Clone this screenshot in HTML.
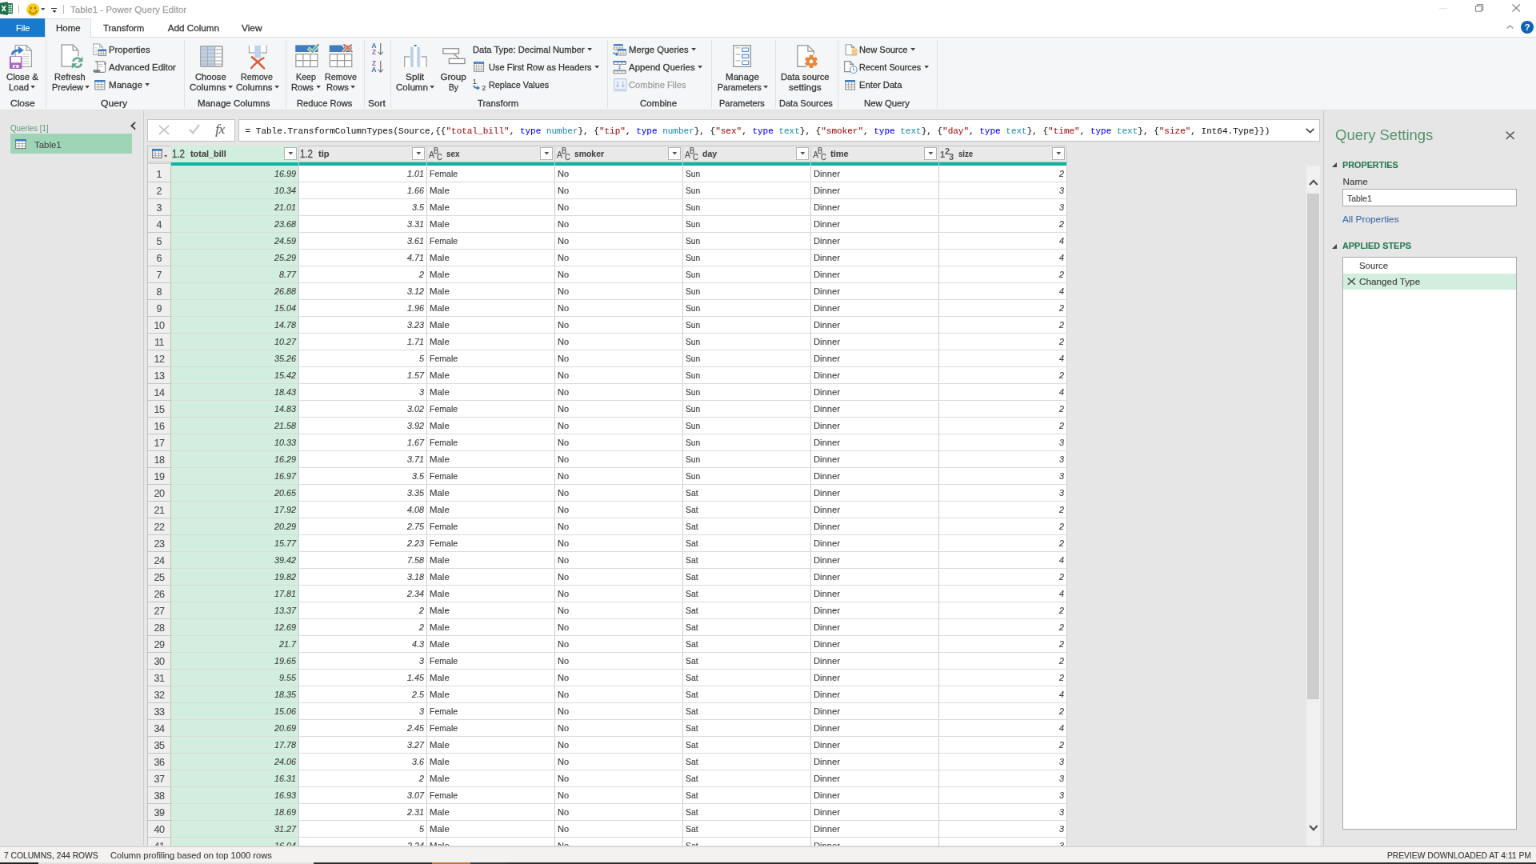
<!DOCTYPE html>
<html lang="en"><head><meta charset="utf-8"><title>Table1 - Power Query Editor</title>
<style>
*{margin:0;padding:0}
html,body{width:1536px;height:864px;overflow:hidden;background:#fff}
#app{position:absolute;left:0;top:0;width:1920px;height:1080px;transform:scale(.8);transform-origin:0 0;will-change:transform;font-family:"Liberation Sans",sans-serif;font-size:11.5px;color:#444;overflow:hidden}
#app div,#app svg{position:absolute}
#app svg{overflow:visible}
.t{white-space:nowrap;transform-origin:0 50%;-webkit-text-stroke:0.15px currentColor}
</style></head>
<body><div id="app">
<div style="left:0px;top:137.5px;width:1920px;height:920px;background:#e6e6e6;"></div>
<div style="left:179px;top:137.5px;width:1px;height:920px;background:#cfcfcf;"></div>
<div style="left:1654px;top:137.5px;width:1px;height:920px;background:#c9c9c9;"></div>
<div style="left:23px;top:5.5px;width:1px;height:11.25px;background:#b9b9b9;"></div>
<div style="left:79px;top:5.5px;width:1px;height:11.25px;background:#b9b9b9;"></div>
<svg style="left:50.87px;top:9.88px" width="5.5" height="3.25" viewBox="0 0 10 6"><path d="M0 0H10L5 6Z" fill="#555"/></svg>
<div style="left:63.88px;top:10.06px;width:7.25px;height:1.19px;background:#333;"></div>
<svg style="left:64.5px;top:12.75px" width="6.12" height="3.12" viewBox="0 0 10 6"><path d="M0 0H10L5 6Z" fill="#2a2a2a"/></svg>
<div class="t" style="top:4.00px;line-height:16px;font-size:11.7px;color:#a3a3a3;transform:scaleX(0.9892);left:87.5px;-webkit-text-stroke-width:0.3px;">Table1 - Power Query Editor</div>
<div style="left:1798.75px;top:10.06px;width:10px;height:0.88px;background:#e4e4e4;"></div>
<svg style="left:1843.75px;top:5px;" width="10.25" height="9.75" viewBox="0 0 8.2 7.8"><path d="M1.9 2V.45h5.85v5.7H6.4M.45 2h5.9v5.35H.45z" fill="none" stroke="#7d7d7d" stroke-width="0.8"/></svg>
<svg style="left:1889.75px;top:5px;" width="10.38" height="10" viewBox="0 0 8.3 8"><path d="M.4 .4l7.5 7.2M7.9 .4L.4 7.6" fill="none" stroke="#808080" stroke-width="0.9"/></svg>
<div style="left:0px;top:23px;width:56.38px;height:23.25px;background:#1979ca;"></div>
<div class="t" style="top:27.00px;line-height:16px;font-size:11.7px;color:#fff;transform:scaleX(0.9216);left:19.56px;-webkit-text-stroke-width:0.12px;">File</div>
<div style="left:0px;top:46.25px;width:1920px;height:91.5px;background:#f5f6f7;border-top:1px solid #dcdddf;border-bottom:1px solid #dedede;box-sizing:border-box;"></div>
<div style="left:56.25px;top:23.25px;width:57.5px;height:24.25px;background:#f5f6f7;border:1px solid #dcdddf;border-bottom:none;box-sizing:border-box;"></div>
<div class="t" style="top:27.00px;line-height:16px;font-size:11.7px;color:#383838;transform:scaleX(0.9813);left:69.69px;-webkit-text-stroke-width:0.3px;">Home</div>
<div class="t" style="top:27.00px;line-height:16px;font-size:11.7px;color:#383838;transform:scaleX(0.9693);left:128.62px;-webkit-text-stroke-width:0.3px;">Transform</div>
<div class="t" style="top:27.00px;line-height:16px;font-size:11.7px;color:#383838;left:209.69px;-webkit-text-stroke-width:0.3px;">Add Column</div>
<div class="t" style="top:27.00px;line-height:16px;font-size:11.7px;color:#383838;transform:scaleX(1.0190);left:302.44px;-webkit-text-stroke-width:0.3px;">View</div>
<svg style="left:1882.5px;top:31.25px;" width="9" height="5" viewBox="0 0 7.2 4"><path d="M.5 3.6L3.6 .8l3.1 2.8" fill="none" stroke="#8e8e8e" stroke-width="1.0"/></svg>
<div style="left:1900.75px;top:25.88px;width:16.25px;height:16.25px;border-radius:50%;background:#0f62b8"></div>
<div class="t" style="top:26.06px;line-height:16px;font-size:11.7px;color:#fff;font-weight:700;left:1905.61px;-webkit-text-stroke-width:0;">?</div>
<div style="left:57.25px;top:49.75px;width:1px;height:85.25px;background:#e2e3e4;"></div>
<div style="left:230.12px;top:49.75px;width:1px;height:85.25px;background:#e2e3e4;"></div>
<div style="left:356.5px;top:49.75px;width:1px;height:85.25px;background:#e2e3e4;"></div>
<div style="left:455px;top:49.75px;width:1px;height:85.25px;background:#e2e3e4;"></div>
<div style="left:487.62px;top:49.75px;width:1px;height:85.25px;background:#e2e3e4;"></div>
<div style="left:758.62px;top:49.75px;width:1px;height:85.25px;background:#e2e3e4;"></div>
<div style="left:888.62px;top:49.75px;width:1px;height:85.25px;background:#e2e3e4;"></div>
<div style="left:968.5px;top:49.75px;width:1px;height:85.25px;background:#e2e3e4;"></div>
<div style="left:1047.12px;top:49.75px;width:1px;height:85.25px;background:#e2e3e4;"></div>
<div style="left:1171.25px;top:49.75px;width:1px;height:85.25px;background:#e2e3e4;"></div>
<div class="t" style="top:121.25px;line-height:16px;font-size:11.7px;color:#383838;transform:scaleX(1.0238);left:12.81px;-webkit-text-stroke-width:0.3px;">Close</div>
<div class="t" style="top:121.25px;line-height:16px;font-size:11.7px;color:#383838;transform:scaleX(1.0397);left:126.44px;-webkit-text-stroke-width:0.3px;">Query</div>
<div class="t" style="top:121.25px;line-height:16px;font-size:11.7px;color:#383838;transform:scaleX(0.9883);left:247.19px;-webkit-text-stroke-width:0.3px;">Manage Columns</div>
<div class="t" style="top:121.25px;line-height:16px;font-size:11.7px;color:#383838;transform:scaleX(0.9525);left:370.56px;-webkit-text-stroke-width:0.3px;">Reduce Rows</div>
<div class="t" style="top:121.25px;line-height:16px;font-size:11.7px;color:#383838;transform:scaleX(1.0194);left:459.56px;-webkit-text-stroke-width:0.3px;">Sort</div>
<div class="t" style="top:121.25px;line-height:16px;font-size:11.7px;color:#383838;transform:scaleX(0.9693);left:596.88px;-webkit-text-stroke-width:0.3px;">Transform</div>
<div class="t" style="top:121.25px;line-height:16px;font-size:11.7px;color:#383838;transform:scaleX(0.9878);left:800.00px;-webkit-text-stroke-width:0.3px;">Combine</div>
<div class="t" style="top:121.25px;line-height:16px;font-size:11.7px;color:#383838;transform:scaleX(0.9405);left:899.31px;-webkit-text-stroke-width:0.3px;">Parameters</div>
<div class="t" style="top:121.25px;line-height:16px;font-size:11.7px;color:#383838;transform:scaleX(0.9434);left:974.06px;-webkit-text-stroke-width:0.3px;">Data Sources</div>
<div class="t" style="top:121.25px;line-height:16px;font-size:11.7px;color:#383838;transform:scaleX(0.9719);left:1079.81px;-webkit-text-stroke-width:0.3px;">New Query</div>
<div class="t" style="top:88.25px;line-height:16px;font-size:11.7px;color:#383838;transform:scaleX(0.9764);left:8.25px;-webkit-text-stroke-width:0.3px;">Close &amp;</div>
<div class="t" style="top:100.75px;line-height:16px;font-size:11.7px;color:#383838;transform:scaleX(0.9605);left:10.5px;-webkit-text-stroke-width:0.3px;">Load</div>
<svg style="left:38px;top:107.12px" width="6.25" height="3.5" viewBox="0 0 10 6"><path d="M0 0H10L5 6Z" fill="#444"/></svg>
<div class="t" style="top:88.25px;line-height:16px;font-size:11.7px;color:#383838;transform:scaleX(0.9459);left:68.12px;-webkit-text-stroke-width:0.3px;">Refresh</div>
<div class="t" style="top:100.75px;line-height:16px;font-size:11.7px;color:#383838;transform:scaleX(0.9372);left:64.5px;-webkit-text-stroke-width:0.3px;">Preview</div>
<svg style="left:106px;top:107.12px" width="6.25" height="3.5" viewBox="0 0 10 6"><path d="M0 0H10L5 6Z" fill="#444"/></svg>
<div class="t" style="top:88.25px;line-height:16px;font-size:11.7px;color:#383838;transform:scaleX(0.9609);left:244.12px;-webkit-text-stroke-width:0.3px;">Choose</div>
<div class="t" style="top:100.75px;line-height:16px;font-size:11.7px;color:#383838;transform:scaleX(0.9883);left:236.56px;-webkit-text-stroke-width:0.3px;">Columns</div>
<svg style="left:284.69px;top:107.12px" width="6.25" height="3.5" viewBox="0 0 10 6"><path d="M0 0H10L5 6Z" fill="#444"/></svg>
<div class="t" style="top:88.25px;line-height:16px;font-size:11.7px;color:#383838;transform:scaleX(0.9181);left:301.00px;-webkit-text-stroke-width:0.3px;">Remove</div>
<div class="t" style="top:100.75px;line-height:16px;font-size:11.7px;color:#383838;transform:scaleX(0.9883);left:294.56px;-webkit-text-stroke-width:0.3px;">Columns</div>
<svg style="left:342.69px;top:107.12px" width="6.25" height="3.5" viewBox="0 0 10 6"><path d="M0 0H10L5 6Z" fill="#444"/></svg>
<div class="t" style="top:88.25px;line-height:16px;font-size:11.7px;color:#383838;transform:scaleX(0.9149);left:369.75px;-webkit-text-stroke-width:0.3px;">Keep</div>
<div class="t" style="top:100.75px;line-height:16px;font-size:11.7px;color:#383838;transform:scaleX(0.9528);left:364.19px;-webkit-text-stroke-width:0.3px;">Rows</div>
<svg style="left:394.56px;top:107.12px" width="6.25" height="3.5" viewBox="0 0 10 6"><path d="M0 0H10L5 6Z" fill="#444"/></svg>
<div class="t" style="top:88.25px;line-height:16px;font-size:11.7px;color:#383838;transform:scaleX(0.9181);left:406.00px;-webkit-text-stroke-width:0.3px;">Remove</div>
<div class="t" style="top:100.75px;line-height:16px;font-size:11.7px;color:#383838;transform:scaleX(0.9528);left:408.06px;-webkit-text-stroke-width:0.3px;">Rows</div>
<svg style="left:438.44px;top:107.12px" width="6.25" height="3.5" viewBox="0 0 10 6"><path d="M0 0H10L5 6Z" fill="#444"/></svg>
<div class="t" style="top:88.25px;line-height:16px;font-size:11.7px;color:#383838;transform:scaleX(1.0160);left:507.19px;-webkit-text-stroke-width:0.3px;">Split</div>
<div class="t" style="top:100.75px;line-height:16px;font-size:11.7px;color:#383838;transform:scaleX(0.9922);left:494.75px;-webkit-text-stroke-width:0.3px;">Column</div>
<svg style="left:537.25px;top:107.12px" width="6.25" height="3.5" viewBox="0 0 10 6"><path d="M0 0H10L5 6Z" fill="#444"/></svg>
<div class="t" style="top:88.25px;line-height:16px;font-size:11.7px;color:#383838;left:550.38px;-webkit-text-stroke-width:0.3px;">Group</div>
<div class="t" style="top:100.75px;line-height:16px;font-size:11.7px;color:#383838;transform:scaleX(0.8697);left:560.81px;-webkit-text-stroke-width:0.3px;">By</div>
<div class="t" style="top:88.25px;line-height:16px;font-size:11.7px;color:#383838;transform:scaleX(0.9904);left:907.06px;-webkit-text-stroke-width:0.3px;">Manage</div>
<div class="t" style="top:100.75px;line-height:16px;font-size:11.7px;color:#383838;transform:scaleX(0.9054);left:896.5px;-webkit-text-stroke-width:0.3px;">Parameters</div>
<svg style="left:953.75px;top:107.12px" width="6.25" height="3.5" viewBox="0 0 10 6"><path d="M0 0H10L5 6Z" fill="#444"/></svg>
<div class="t" style="top:88.25px;line-height:16px;font-size:11.7px;color:#383838;transform:scaleX(0.9611);left:976.31px;-webkit-text-stroke-width:0.3px;">Data source</div>
<div class="t" style="top:100.75px;line-height:16px;font-size:11.7px;color:#383838;transform:scaleX(1.0075);left:986.31px;-webkit-text-stroke-width:0.3px;">settings</div>
<div class="t" style="top:54.12px;line-height:16px;font-size:11.7px;color:#383838;transform:scaleX(0.9681);left:136px;-webkit-text-stroke-width:0.3px;">Properties</div>
<div class="t" style="top:76.25px;line-height:16px;font-size:11.7px;color:#383838;transform:scaleX(0.9784);left:136px;-webkit-text-stroke-width:0.3px;">Advanced Editor</div>
<div class="t" style="top:98.12px;line-height:16px;font-size:11.7px;color:#383838;transform:scaleX(0.9904);left:136px;-webkit-text-stroke-width:0.3px;">Manage</div>
<svg style="left:181.25px;top:103.5px" width="6.25" height="3.5" viewBox="0 0 10 6"><path d="M0 0H10L5 6Z" fill="#444"/></svg>
<div class="t" style="top:54.12px;line-height:16px;font-size:11.7px;color:#383838;transform:scaleX(0.9524);left:591.25px;-webkit-text-stroke-width:0.3px;">Data Type: Decimal Number</div>
<svg style="left:734.38px;top:59.5px" width="6.25" height="3.5" viewBox="0 0 10 6"><path d="M0 0H10L5 6Z" fill="#444"/></svg>
<div class="t" style="top:76.25px;line-height:16px;font-size:11.7px;color:#383838;transform:scaleX(0.9430);left:610.5px;-webkit-text-stroke-width:0.3px;">Use First Row as Headers</div>
<svg style="left:742.62px;top:81.62px" width="6.25" height="3.5" viewBox="0 0 10 6"><path d="M0 0H10L5 6Z" fill="#444"/></svg>
<div class="t" style="top:98.12px;line-height:16px;font-size:11.7px;color:#383838;transform:scaleX(0.9281);left:610.5px;-webkit-text-stroke-width:0.3px;">Replace Values</div>
<div class="t" style="top:54.12px;line-height:16px;font-size:11.7px;color:#383838;transform:scaleX(0.9660);left:786px;-webkit-text-stroke-width:0.3px;">Merge Queries</div>
<svg style="left:864.12px;top:59.5px" width="6.25" height="3.5" viewBox="0 0 10 6"><path d="M0 0H10L5 6Z" fill="#444"/></svg>
<div class="t" style="top:76.25px;line-height:16px;font-size:11.7px;color:#383838;transform:scaleX(0.9786);left:786px;-webkit-text-stroke-width:0.3px;">Append Queries</div>
<svg style="left:872.12px;top:81.62px" width="6.25" height="3.5" viewBox="0 0 10 6"><path d="M0 0H10L5 6Z" fill="#444"/></svg>
<div class="t" style="top:98.12px;line-height:16px;font-size:11.7px;color:#a2a2a2;transform:scaleX(0.9595);left:786px;-webkit-text-stroke-width:0.3px;">Combine Files</div>
<div class="t" style="top:54.12px;line-height:16px;font-size:11.7px;color:#383838;transform:scaleX(0.9494);left:1073.88px;-webkit-text-stroke-width:0.3px;">New Source</div>
<svg style="left:1137.75px;top:59.5px" width="6.25" height="3.5" viewBox="0 0 10 6"><path d="M0 0H10L5 6Z" fill="#444"/></svg>
<div class="t" style="top:76.25px;line-height:16px;font-size:11.7px;color:#383838;transform:scaleX(0.9280);left:1073.88px;-webkit-text-stroke-width:0.3px;">Recent Sources</div>
<svg style="left:1154.5px;top:81.62px" width="6.25" height="3.5" viewBox="0 0 10 6"><path d="M0 0H10L5 6Z" fill="#444"/></svg>
<div class="t" style="top:98.12px;line-height:16px;font-size:11.7px;color:#383838;transform:scaleX(0.9566);left:1073.88px;-webkit-text-stroke-width:0.3px;">Enter Data</div>
<svg style="left:0px;top:2px;" width="17.5" height="17.5" viewBox="0 0 14 14"><rect x="7.2" y="1.6" width="5.6" height="10.6" rx="0.6" fill="#2b7d50"/><path d="M8.5 3.2h1.5v1.3H8.5zM10.7 3.2h1.3v1.3h-1.3zM8.5 5.3h1.5v1.3H8.5zM10.7 5.3h1.3v1.3h-1.3zM8.5 7.4h1.5v1.3H8.5zM10.7 7.4h1.3v1.3h-1.3zM8.5 9.5h1.5v1.3H8.5zM10.7 9.5h1.3v1.3h-1.3z" fill="#e8f3ec"/><path d="M-1 1.5L7.9 .2v13.4L-1 12.3z" fill="#1f7246"/><path d="M2 4.2l3.6 5.4M5.6 4.2L2 9.6" fill="none" stroke="#fff" stroke-width="1.25"/></svg>
<svg style="left:32.5px;top:3.75px;" width="16.5" height="16.5" viewBox="0 0 13.2 13.2"><circle cx="6.6" cy="6.5" r="6.3" fill="#fdc90f"/><ellipse cx="4.5" cy="4.8" rx="0.85" ry="1.2" fill="#7c6a36"/><ellipse cx="8.9" cy="4.8" rx="0.85" ry="1.2" fill="#7c6a36"/><path d="M3.0 7.8c.9 1.8 2.2 2.6 3.6 2.6S9.4 9.6 10.3 7.8" fill="none" stroke="#957a22" stroke-width="1.15" stroke-linecap="round"/></svg>
<svg style="left:11.25px;top:55px;" width="30" height="32.5" viewBox="0 0 24 26"><path d="M6.5 1.2h11.0l5.2 5.2v16.2h-16.2z" fill="#fff" stroke="#a2a2a2" stroke-width="1.0" stroke-linejoin="miter"/><path d="M17.5 1.2v5.2h5.2" fill="none" stroke="#a2a2a2" stroke-width="1.0"/><path d="M13.8 10h6.6M13.8 12.5h6.6M13.8 15h6.6M13.8 17.5h6.6M13.8 19.8h6.6" stroke="#cbcbcb" stroke-width="0.9" fill="none"/><rect x="0.7" y="12.1" width="12.5" height="12.6" rx="0.7" fill="#a667c4"/><rect x="2.3" y="12.8" width="9.6" height="5.9" fill="#fff"/><rect x="3.9" y="21" width="6.1" height="2.8" fill="#fff"/><rect x="5.6" y="21.7" width="1.9" height="2.1" fill="#a667c4"/><path d="M3.3 10.9C3.5 7.6 6.4 6.2 11.4 6.2" fill="none" stroke="#3f7dc1" stroke-width="2.3"/><path d="M9.6 2.3l5.4 3.9-5.4 3.9z" fill="#3f7dc1"/></svg>
<svg style="left:76.25px;top:55px;" width="30" height="31.25" viewBox="0 0 24 25"><path d="M0.9 0.8h11.200000000000001l5.4 5.4v16.200000000000003h-16.6z" fill="#fff" stroke="#a6a6a6" stroke-width="1.2" stroke-linejoin="miter"/><path d="M12.1 0.8v5.4h5.4" fill="none" stroke="#a6a6a6" stroke-width="1.2"/><circle cx="16.5" cy="18.6" r="6.4" fill="#f5f6f7"/><path d="M12.3 17.6a4.3 4.3 0 0 1 7.3-2.2" fill="none" stroke="#5fa98a" stroke-width="1.9"/><path d="M21.9 12.6v5.2h-5.2z" fill="#5fa98a"/><path d="M20.7 19.6a4.3 4.3 0 0 1-7.3 2.2" fill="none" stroke="#5fa98a" stroke-width="1.9"/><path d="M11.1 24.6v-5.2h5.2z" fill="#5fa98a"/></svg>
<svg style="left:116.25px;top:53.75px;" width="17.5" height="16.25" viewBox="0 0 14 13"><path d="M0.6 0.7h6.2l3.2 3.2v7.6000000000000005h-9.4z" fill="#fff" stroke="#b3b3b3" stroke-width="0.9" stroke-linejoin="miter"/><path d="M6.8 0.7v3.2h3.2" fill="none" stroke="#b3b3b3" stroke-width="0.9"/><path d="M2.2 4.6h2M2.2 6.6h2M2.2 8.6h2" stroke="#c2c2c2" stroke-width="0.8"/><rect x="5.6" y="6.6" width="7.6" height="5.8" fill="#fff" stroke="#8f8f8f" stroke-width="0.9"/><path d="M5.6 10.25h7.6M8.13 8.1v4.3M10.67 8.1v4.3" fill="none" stroke="#a8a8a8" stroke-width="0.8"/><rect x="5.1499999999999995" y="6.1499999999999995" width="8.5" height="1.95" fill="#3f7dc1"/></svg>
<svg style="left:116.25px;top:76.25px;" width="17.5" height="15" viewBox="0 0 14 12"><path d="M2.4 .7h8.9a1.2 1.2 0 0 1 1.2 1.2v8.3a1.3 1.3 0 0 1-1.3 1.3H4.6V2.9A2.2 2.2 0 0 0 2.4 .7z" fill="#fff" stroke="#8e8e8e" stroke-width="0.9"/><path d="M.7 9.3h6.4v1a1.2 1.2 0 0 1-1.2 1.2H1.9A1.2 1.2 0 0 1 .7 10.3z" fill="#7b7b7b" stroke="#7b7b7b" stroke-width="0.6"/><path d="M5.6 3.6h4M5.6 5.6h4" stroke="#bdbdbd" stroke-width="0.9"/><path d="M11.6 1.4l1.8 1.4-1.8 1.4z" fill="#6a6a6a"/></svg>
<svg style="left:117.5px;top:100px;" width="13.75" height="12.5" viewBox="0 0 11 10"><rect x="0.6" y="0.45" width="9.7" height="9.1" fill="#fff" stroke="#8f8f8f" stroke-width="0.9"/><path d="M0.6 4.55h9.7M0.6 7.05h9.7M3.83 2.0500000000000003v7.5M7.07 2.0500000000000003v7.5" fill="none" stroke="#a8a8a8" stroke-width="0.8"/><rect x="0.14999999999999997" y="0.0" width="10.6" height="2.0500000000000003" fill="#3f7dc1"/></svg>
<svg style="left:250px;top:56.62px;" width="28.75" height="27.5" viewBox="0 0 23 22"><rect x="0.5" y="0.6" width="21.8" height="20.2" rx="0.8" fill="#fff" stroke="#a4a4a4" stroke-width="1"/><rect x="1" y="1.1" width="13.7" height="19.2" fill="#bdd3ea"/><path d="M0.6 4.0h21.4M0.6 7.7h21.4M0.6 11.4h21.4M0.6 15.1h21.4M0.6 18.5h21.4" stroke="#b9b9b9" stroke-width="1.5" fill="none" opacity=".75"/><path d="M7.5 .8v19.8M14.9 .8v19.8" stroke="#a9adb3" stroke-width="0.9" fill="none"/><rect x="0.5" y="0.6" width="21.8" height="20.2" rx="0.8" fill="none" stroke="#a4a4a4" stroke-width="1"/></svg>
<svg style="left:310px;top:56.25px;" width="25" height="31.25" viewBox="0 0 20 25"><path d="M1.2 .8v7.1h5.4M18.4 .8v7.1H13" fill="none" stroke="#9c9c9c" stroke-width="1"/><path d="M1.7 .8h4.9v6.6H1.7zM13 .8h4.9v6.6H13z" fill="#fff"/><path d="M6.6 .8h6.2v12.2H6.6z" fill="#bdd3ea"/><path d="M3.9 12.3C7.6 15 11.8 19 16.1 23.6M15.6 13.2C10.6 15.9 6.4 19.4 3.4 23.2" fill="none" stroke="#d9603b" stroke-width="2.0" stroke-linecap="round"/></svg>
<svg style="left:367.5px;top:53.75px;" width="32.5" height="31.25" viewBox="0 0 26 25"><rect x="1.0" y="1.9" width="22.6" height="6.9" fill="#3f7dc1"/><rect x="1.5" y="10.9" width="21.6" height="12.7" fill="#fff" stroke="#9b9b9b" stroke-width="1"/><path d="M8.70 10.9v12.7M15.90 10.9v12.7M1.5 17.25h21.6" fill="none" stroke="#9b9b9b" stroke-width="1"/><path d="M13.8 4.9l4.3 3.8L24.5 .8" fill="none" stroke="#f5f6f7" stroke-width="3.3"/><path d="M14.1 5.2l4.0 3.4L24.3 1.0" fill="none" stroke="#5fa98a" stroke-width="1.7"/></svg>
<svg style="left:411.25px;top:53.75px;" width="32.5" height="31.25" viewBox="0 0 26 25"><path d="M0.6 1.9h12.4l2.2 3.4-2.2 3.5H0.6z" fill="#3f7dc1"/><rect x="15" y="1.9" width="7.8" height="6.9" fill="#3f7dc1"/><rect x="1.1" y="10.9" width="21.9" height="12.7" fill="#fff" stroke="#9b9b9b" stroke-width="1"/><path d="M8.40 10.9v12.7M15.70 10.9v12.7M1.1 17.25h21.9" fill="none" stroke="#9b9b9b" stroke-width="1"/><path d="M15.2 1.5C17.8 3.3 20.4 5.6 23.1 8.5M22.6 1.7C19.6 3.5 17 5.6 14.9 8.3" fill="none" stroke="#f5f6f7" stroke-width="2.8"/><path d="M15.2 1.5C17.8 3.3 20.4 5.6 23.1 8.5M22.6 1.7C19.6 3.5 17 5.6 14.9 8.3" fill="none" stroke="#d9603b" stroke-width="1.5" stroke-linecap="round"/></svg>
<div class="t" style="top:49.50px;line-height:16px;font-size:8.2px;color:#3d7cc3;font-weight:700;left:464.5px;">A</div>
<div class="t" style="top:57.50px;line-height:16px;font-size:8.2px;color:#a667c4;font-weight:700;left:464.88px;">Z</div>
<div class="t" style="top:71.62px;line-height:16px;font-size:8.2px;color:#a667c4;font-weight:700;left:464.88px;">Z</div>
<div class="t" style="top:79.62px;line-height:16px;font-size:8.2px;color:#3d7cc3;font-weight:700;left:464.5px;">A</div>
<svg style="left:472px;top:54.12px;" width="7.5" height="15.5" viewBox="0 0 6 12.4"><path d="M3 0v11.2M.5 8.6L3 11.4l2.5-2.8" fill="none" stroke="#6a6a6a" stroke-width="0.9"/></svg>
<svg style="left:472px;top:76px;" width="7.5" height="15.5" viewBox="0 0 6 12.4"><path d="M3 0v11.2M.5 8.6L3 11.4l2.5-2.8" fill="none" stroke="#6a6a6a" stroke-width="0.9"/></svg>
<svg style="left:505px;top:55px;" width="28.75" height="29.25" viewBox="0 0 23 23.4"><defs><linearGradient id="sg" x1="0" y1="0" x2="1" y2="0"><stop offset="0" stop-color="#c9dbee"/><stop offset="0.5" stop-color="#b3cde8"/><stop offset="1" stop-color="#d5e3f1"/></linearGradient></defs><path d="M.6 23V12.6h5.6V23zM16.8 23V12.6h5.6V23z" fill="#fff"/><path d="M.6 23V12.6h5.2M17.2 12.6h5.2V23" fill="none" stroke="#9c9c9c" stroke-width="1"/><rect x="6.3" y="3" width="3.5" height="20" fill="url(#sg)"/><rect x="9.8" y="3" width="3.1" height="20" fill="#fff"/><rect x="12.9" y="3" width="3.3" height="20" fill="url(#sg)"/><path d="M9.5 .7h3.6l-1.8 2.1z" fill="#3f7dc1"/></svg>
<svg style="left:552.5px;top:60px;" width="30" height="20" viewBox="0 0 24 16"><rect x="0.7" y="0.6" width="15.7" height="5.0" fill="#fff" stroke="#8c8c8c" stroke-width="1"/><rect x="6.7" y="10.7" width="15.7" height="4.9" fill="#fff" stroke="#8c8c8c" stroke-width="1"/><path d="M11.2 5.6l5.3 5" fill="none" stroke="#8c8c8c" stroke-width="0.9"/></svg>
<svg style="left:591.5px;top:77px;" width="13.75" height="13.25" viewBox="0 0 11 10.6"><rect x=".6" y=".6" width="9.4" height="9.2" fill="#fff" stroke="#8f8f8f" stroke-width="0.9"/><path d="M2.9 2.4v7.4M5.3 2.4v7.4M7.7 2.4v7.4M.6 4.8h9.4M.6 7.3h9.4" fill="none" stroke="#b4b4b4" stroke-width="0.8"/><rect x=".2" y=".2" width="10.2" height="2.2" fill="#3f7dc1"/><path d="M2.9 .9v1.5M5.3 .9v1.5M7.7 .9v1.5" stroke="#9fbde2" stroke-width="0.7"/></svg>
<div class="t" style="top:93.75px;line-height:16px;font-size:8.4px;color:#444;left:591px;">1</div>
<div class="t" style="top:102.25px;line-height:16px;font-size:8.4px;color:#444;left:602.5px;">2</div>
<svg style="left:591.25px;top:105.75px;" width="10" height="6.75" viewBox="0 0 8 5.4"><path d="M.9 .6C1.2 2.6 2.6 3.2 5 3.2" fill="none" stroke="#3f7dc1" stroke-width="1.4"/><path d="M4.3 .8l2.9 2.4-2.9 2.2z" fill="#3f7dc1"/></svg>
<svg style="left:766.25px;top:55px;" width="17.5" height="15.5" viewBox="0 0 14 12.4"><rect x="1.2" y="0.5" width="8.4" height="5.4" fill="#fff" stroke="#9a9a9a" stroke-width="0.8"/><path d="M1.2 3.85h8.4M4.00 1.8v4.1000000000000005M6.80 1.8v4.1000000000000005" fill="none" stroke="#b0b0b0" stroke-width="0.7"/><rect x="0.7999999999999999" y="0.09999999999999998" width="9.200000000000001" height="1.7000000000000002" fill="#3f7dc1"/><rect x="5.2" y="5.4" width="7.8" height="5.8" fill="#fff" stroke="#8f8f8f" stroke-width="0.8"/><path d="M5.2 9.00h7.8M7.80 6.800000000000001v4.4M10.40 6.800000000000001v4.4" fill="none" stroke="#b0b0b0" stroke-width="0.7"/><rect x="4.8" y="5.0" width="8.6" height="1.7999999999999998" fill="#3f7dc1"/><path d="M.5 8.3C.9 9.7 1.9 10.1 3.4 10.1" fill="none" stroke="#3f7dc1" stroke-width="1.2"/><path d="M3 8.1l2.7 2-2.7 2z" fill="#3f7dc1"/></svg>
<svg style="left:766.25px;top:76.25px;" width="17.5" height="16.75" viewBox="0 0 14 13.4"><rect x="0.4" y="0.3" width="13.0" height="3.7" rx="0.7" fill="#979797"/><rect x="1.55" y="1.70" width="3.10" height="1.5" fill="#fff"/><rect x="5.35" y="1.70" width="3.10" height="1.5" fill="#fff"/><rect x="9.15" y="1.70" width="3.10" height="1.5" fill="#fff"/><rect x="0.4" y="0.1" width="13" height="1.3" fill="#3f7dc1"/><rect x="0.4" y="9.0" width="13.0" height="3.9" rx="0.7" fill="#979797"/><rect x="1.55" y="10.60" width="3.10" height="1.5" fill="#fff"/><rect x="5.35" y="10.60" width="3.10" height="1.5" fill="#fff"/><rect x="9.15" y="10.60" width="3.10" height="1.5" fill="#fff"/><path d="M6.9 4.6v4.6" stroke="#3f7dc1" stroke-width="1.5" stroke-dasharray="1.2 0.9" fill="none"/></svg>
<svg style="left:766.75px;top:97.5px;" width="16.75" height="16.25" viewBox="0 0 13.4 13"><rect x=".5" y=".5" width="12.3" height="12" rx="0.8" fill="#eef3f9" stroke="#b9cce6" stroke-width="0.9"/><path d="M4 3v5.4M2.6 7l1.4 1.6L5.4 7M9.4 3v5.4M8 7l1.4 1.6L10.8 7" fill="none" stroke="#a9bcd8" stroke-width="0.9"/><path d="M1.6 10.9h10.2" stroke="#b4c8e2" stroke-width="0.9"/></svg>
<svg style="left:915.62px;top:55.62px;" width="23.75" height="28.75" viewBox="0 0 19 23"><rect x=".7" y=".7" width="17.2" height="21.2" fill="#fff" stroke="#8d8d8d" stroke-width="1"/><path d="M2.8 3.1h4.6M2.8 15.9h4.6" stroke="#a9a9a9" stroke-width="0.8"/><path d="M2.8 9.5h4.6" stroke="#c4c4c4" stroke-width="1.4"/><rect x="9.3" y="3.2" width="6.5" height="3.5" rx=".5" fill="#fff" stroke="#5b90cb" stroke-width="0.9"/><rect x="9.3" y="9.5" width="6.5" height="3.7" rx=".5" fill="#eaf1f9" stroke="#7ea6d4" stroke-width="1.2"/><rect x="9.3" y="16.0" width="6.5" height="3.6" rx=".5" fill="#fff" stroke="#5b90cb" stroke-width="0.9"/></svg>
<svg style="left:995.62px;top:55.62px;" width="27.5" height="30" viewBox="0 0 22 24"><path d="M0.7 0.6h10.399999999999999l5.8 5.8v15.5h-16.2z" fill="#fff" stroke="#959595" stroke-width="1.0" stroke-linejoin="miter"/><path d="M11.099999999999998 0.6v5.8h5.8" fill="none" stroke="#959595" stroke-width="1.0"/><circle cx="14.4" cy="16.7" r="7.2" fill="#f5f6f7"/><path d="M.7 21.9h8.0" stroke="#959595" stroke-width="1"/><path d="M13.13 10.73L15.67 10.73L15.81 12.64L17.21 13.44L18.93 12.62L20.20 14.81L18.62 15.89L18.62 17.51L20.20 18.59L18.93 20.78L17.21 19.96L15.81 20.76L15.67 22.67L13.13 22.67L12.99 20.76L11.59 19.96L9.87 20.78L8.60 18.59L10.18 17.51L10.18 15.89L8.60 14.81L9.87 12.62L11.59 13.44L12.99 12.64Z" fill="#e8873a" stroke="#e8873a" stroke-width="0.9" stroke-linejoin="round"/><circle cx="14.4" cy="16.7" r="1.9" fill="#fff"/></svg>
<svg style="left:1055.62px;top:54.75px;" width="16.25" height="15.5" viewBox="0 0 13 12.4"><path d="M0.9 0.6h5.6l3.0 3.0v7.4h-8.6z" fill="#fff" stroke="#9f9f9f" stroke-width="0.9" stroke-linejoin="miter"/><path d="M6.5 0.6v3.0h3.0" fill="none" stroke="#9f9f9f" stroke-width="0.9"/><path d="M6.9 5.2v5.6a2.75 1.1 0 0 0 5.5 0V5.2z" fill="#edc581"/><ellipse cx="9.65" cy="5.2" rx="2.75" ry="1.15" fill="#f1d196"/><path d="M6.9 7.2a2.75 1.1 0 0 0 5.5 0" fill="none" stroke="#f7e3bb" stroke-width="0.6"/></svg>
<svg style="left:1054.75px;top:76.25px;" width="17.5" height="16.5" viewBox="0 0 14 13.2"><path d="M0.5 0.5h5.6l3.0 3.0v7.4h-8.6z" fill="#fff" stroke="#8d8d8d" stroke-width="0.9" stroke-linejoin="miter"/><path d="M6.1 0.5v3.0h3.0" fill="none" stroke="#8d8d8d" stroke-width="0.9"/><circle cx="9.4" cy="8.9" r="3.5" fill="#fff" stroke="#5f97d2" stroke-width="0.9"/><path d="M9.3 6.9v2.1l1.6 1" fill="none" stroke="#777" stroke-width="0.7"/></svg>
<svg style="left:1056px;top:100.12px;" width="13.75" height="12.5" viewBox="0 0 11 10"><rect x="0.6" y="0.45" width="9.3" height="9.1" fill="#fff" stroke="#8f8f8f" stroke-width="0.9"/><path d="M0.6 4.55h9.3M0.6 7.05h9.3M3.70 2.0500000000000003v7.5M6.80 2.0500000000000003v7.5" fill="none" stroke="#a8a8a8" stroke-width="0.8"/><rect x="0.14999999999999997" y="0.0" width="10.200000000000001" height="2.0500000000000003" fill="#3f7dc1"/></svg>
<div class="t" style="top:152.25px;line-height:16px;font-size:11.7px;color:#5e9a78;transform:scaleX(0.8344);left:13.25px;-webkit-text-stroke-width:0;">Queries [1]</div>
<svg style="left:163.12px;top:152.25px;" width="6.75" height="10.5" viewBox="0 0 5.4 8.4"><path d="M4.9 .7L1.1 4.2 4.9 7.7" fill="none" stroke="#3c3c3c" stroke-width="1.45"/></svg>
<div style="left:13px;top:167.12px;width:152px;height:24.88px;background:#9fd5b7;"></div>
<div class="t" style="top:172.75px;line-height:16px;font-size:11.7px;color:#4a4a4a;transform:scaleX(0.9789);left:42.5px;-webkit-text-stroke-width:0.1px;">Table1</div>
<svg style="left:19px;top:174px;" width="13.75" height="12.5" viewBox="0 0 11 10"><rect x="0.45" y="0.45" width="9.9" height="8.8" fill="#fff" stroke="#7d7d7d" stroke-width="0.9"/><path d="M0.45 4.38h9.9M0.45 6.82h9.9M3.75 1.95v7.300000000000001M7.05 1.95v7.300000000000001" fill="none" stroke="#a5a5a5" stroke-width="0.7"/><rect x="0.0" y="0.0" width="10.8" height="1.95" fill="#3b78c3"/></svg>
<div style="left:184.25px;top:149px;width:109.25px;height:27.75px;background:#fff;border:1px solid #c6c6c6;box-sizing:border-box;"></div>
<div style="left:297.88px;top:149px;width:1351.88px;height:27.75px;background:#fff;border:1px solid #c6c6c6;box-sizing:border-box;"></div>
<svg style="left:197.88px;top:155.5px;" width="14.25" height="12.75" viewBox="0 0 11.4 10.2"><path d="M.7 .7l10 8.8M10.7 .7l-10 8.8" fill="none" stroke="#c6c6c6" stroke-width="1.5"/></svg>
<svg style="left:235.75px;top:155.25px;" width="13.75" height="12.5" viewBox="0 0 11 10"><path d="M.7 5.4l3.5 3.7L10.3 .7" fill="none" stroke="#c6c6c6" stroke-width="1.6"/></svg>
<div class="t" style="left:269.25px;top:150.75px;line-height:20px;font-family:Liberation Serif,serif;font-style:italic;font-size:17.5px;color:#6a6a6a;letter-spacing:-0.6px;-webkit-text-stroke-width:0.2px">fx</div>
<div class="t" style="left:306.62px;top:156.12px;line-height:16px;font-family:Liberation Mono,monospace;font-size:11px;letter-spacing:0px;white-space:pre;-webkit-text-stroke-width:0.08px"><span style="color:#222">= Table.TransformColumnTypes(Source,{{</span><span style="color:#a31515">"total_bill"</span><span style="color:#222">, </span><span style="color:#0000ff">type</span><span style="color:#222"> </span><span style="color:#2b91af">number</span><span style="color:#222">}, {</span><span style="color:#a31515">"tip"</span><span style="color:#222">, </span><span style="color:#0000ff">type</span><span style="color:#222"> </span><span style="color:#2b91af">number</span><span style="color:#222">}, {</span><span style="color:#a31515">"sex"</span><span style="color:#222">, </span><span style="color:#0000ff">type</span><span style="color:#222"> </span><span style="color:#2b91af">text</span><span style="color:#222">}, {</span><span style="color:#a31515">"smoker"</span><span style="color:#222">, </span><span style="color:#0000ff">type</span><span style="color:#222"> </span><span style="color:#2b91af">text</span><span style="color:#222">}, {</span><span style="color:#a31515">"day"</span><span style="color:#222">, </span><span style="color:#0000ff">type</span><span style="color:#222"> </span><span style="color:#2b91af">text</span><span style="color:#222">}, {</span><span style="color:#a31515">"time"</span><span style="color:#222">, </span><span style="color:#0000ff">type</span><span style="color:#222"> </span><span style="color:#2b91af">text</span><span style="color:#222">}, {</span><span style="color:#a31515">"size"</span><span style="color:#222">, Int64.Type}})</span></div>
<svg style="left:1632px;top:160.25px;" width="11.25" height="6.75" viewBox="0 0 9 5.4"><path d="M.7 .7L4.5 4.5 8.3 .7" fill="none" stroke="#444" stroke-width="1.3"/></svg>
<div style="left:184.25px;top:181.5px;width:1149.25px;height:21px;background:#e9e9e9;border:1px solid #c4c4c4;box-sizing:border-box;"></div>
<div style="left:213.75px;top:182.25px;width:159.25px;height:20.25px;background:#d2eede;"></div>
<div style="left:213.5px;top:207px;width:1120px;height:850.5px;background:#fff;"></div>
<div style="left:213.5px;top:207px;width:159.5px;height:850.5px;background:#d2eede;"></div>
<div style="left:184.25px;top:202.5px;width:29.25px;height:855px;background:#efefef;border-left:1px solid #c4c4c4;border-right:1px solid #c4c4c4;box-sizing:border-box;"></div>
<div style="left:184.25px;top:203.75px;width:29.25px;height:1px;background:#c9c9c9;"></div>
<div style="left:213.5px;top:202.5px;width:1120px;height:4.5px;background:#0bb5a1;"></div>
<div style="left:372.62px;top:181.5px;width:1px;height:876px;background:#cfcfcf;"></div>
<div style="left:532.62px;top:181.5px;width:1px;height:876px;background:#cfcfcf;"></div>
<div style="left:692.62px;top:181.5px;width:1px;height:876px;background:#cfcfcf;"></div>
<div style="left:852.62px;top:181.5px;width:1px;height:876px;background:#cfcfcf;"></div>
<div style="left:1012.62px;top:181.5px;width:1px;height:876px;background:#cfcfcf;"></div>
<div style="left:1172.62px;top:181.5px;width:1px;height:876px;background:#cfcfcf;"></div>
<div style="left:1332.62px;top:181.5px;width:1px;height:876px;background:#cfcfcf;"></div>
<div style="left:184.25px;top:226.88px;width:29.25px;height:1px;background:#c6c6c6;"></div>
<div style="left:213.5px;top:226.88px;width:1120px;height:1px;background:#dcdcdc;"></div>
<div class="t" style="top:209.88px;line-height:16px;font-size:12.6px;color:#505050;left:195.50px;-webkit-text-stroke-width:0.1px;">1</div>
<div class="t" style="top:208.75px;line-height:16px;font-size:11.7px;color:#444;transform:scaleX(0.9231);font-style:italic;left:342.85px;">16.99</div>
<div class="t" style="top:208.75px;line-height:16px;font-size:11.7px;color:#444;transform:scaleX(0.9231);font-style:italic;left:508.85px;">1.01</div>
<div class="t" style="top:208.75px;line-height:16px;font-size:11.7px;color:#444;transform:scaleX(0.9035);left:537.25px;">Female</div>
<div class="t" style="top:208.75px;line-height:16px;font-size:11.7px;color:#444;transform:scaleX(0.9444);left:697.25px;">No</div>
<div class="t" style="top:208.75px;line-height:16px;font-size:11.7px;color:#444;transform:scaleX(0.8766);left:857.25px;">Sun</div>
<div class="t" style="top:208.75px;line-height:16px;font-size:11.7px;color:#444;transform:scaleX(0.9538);left:1017.25px;">Dinner</div>
<div class="t" style="top:208.75px;line-height:16px;font-size:11.7px;color:#444;transform:scaleX(0.9231);font-style:italic;left:1323.87px;">2</div>
<div style="left:184.25px;top:247.88px;width:29.25px;height:1px;background:#c6c6c6;"></div>
<div style="left:213.5px;top:247.88px;width:1120px;height:1px;background:#dcdcdc;"></div>
<div class="t" style="top:230.88px;line-height:16px;font-size:12.6px;color:#505050;left:195.50px;-webkit-text-stroke-width:0.1px;">2</div>
<div class="t" style="top:229.75px;line-height:16px;font-size:11.7px;color:#444;transform:scaleX(0.9231);font-style:italic;left:342.85px;">10.34</div>
<div class="t" style="top:229.75px;line-height:16px;font-size:11.7px;color:#444;transform:scaleX(0.9231);font-style:italic;left:508.85px;">1.66</div>
<div class="t" style="top:229.75px;line-height:16px;font-size:11.7px;color:#444;transform:scaleX(0.9760);left:537.25px;">Male</div>
<div class="t" style="top:229.75px;line-height:16px;font-size:11.7px;color:#444;transform:scaleX(0.9444);left:697.25px;">No</div>
<div class="t" style="top:229.75px;line-height:16px;font-size:11.7px;color:#444;transform:scaleX(0.8766);left:857.25px;">Sun</div>
<div class="t" style="top:229.75px;line-height:16px;font-size:11.7px;color:#444;transform:scaleX(0.9538);left:1017.25px;">Dinner</div>
<div class="t" style="top:229.75px;line-height:16px;font-size:11.7px;color:#444;transform:scaleX(0.9231);font-style:italic;left:1323.87px;">3</div>
<div style="left:184.25px;top:268.88px;width:29.25px;height:1px;background:#c6c6c6;"></div>
<div style="left:213.5px;top:268.88px;width:1120px;height:1px;background:#dcdcdc;"></div>
<div class="t" style="top:251.88px;line-height:16px;font-size:12.6px;color:#505050;left:195.50px;-webkit-text-stroke-width:0.1px;">3</div>
<div class="t" style="top:250.75px;line-height:16px;font-size:11.7px;color:#444;transform:scaleX(0.9231);font-style:italic;left:342.85px;">21.01</div>
<div class="t" style="top:250.75px;line-height:16px;font-size:11.7px;color:#444;transform:scaleX(0.9231);font-style:italic;left:514.86px;">3.5</div>
<div class="t" style="top:250.75px;line-height:16px;font-size:11.7px;color:#444;transform:scaleX(0.9760);left:537.25px;">Male</div>
<div class="t" style="top:250.75px;line-height:16px;font-size:11.7px;color:#444;transform:scaleX(0.9444);left:697.25px;">No</div>
<div class="t" style="top:250.75px;line-height:16px;font-size:11.7px;color:#444;transform:scaleX(0.8766);left:857.25px;">Sun</div>
<div class="t" style="top:250.75px;line-height:16px;font-size:11.7px;color:#444;transform:scaleX(0.9538);left:1017.25px;">Dinner</div>
<div class="t" style="top:250.75px;line-height:16px;font-size:11.7px;color:#444;transform:scaleX(0.9231);font-style:italic;left:1323.87px;">3</div>
<div style="left:184.25px;top:289.88px;width:29.25px;height:1px;background:#c6c6c6;"></div>
<div style="left:213.5px;top:289.88px;width:1120px;height:1px;background:#dcdcdc;"></div>
<div class="t" style="top:272.88px;line-height:16px;font-size:12.6px;color:#505050;left:195.50px;-webkit-text-stroke-width:0.1px;">4</div>
<div class="t" style="top:271.75px;line-height:16px;font-size:11.7px;color:#444;transform:scaleX(0.9231);font-style:italic;left:342.85px;">23.68</div>
<div class="t" style="top:271.75px;line-height:16px;font-size:11.7px;color:#444;transform:scaleX(0.9231);font-style:italic;left:508.85px;">3.31</div>
<div class="t" style="top:271.75px;line-height:16px;font-size:11.7px;color:#444;transform:scaleX(0.9760);left:537.25px;">Male</div>
<div class="t" style="top:271.75px;line-height:16px;font-size:11.7px;color:#444;transform:scaleX(0.9444);left:697.25px;">No</div>
<div class="t" style="top:271.75px;line-height:16px;font-size:11.7px;color:#444;transform:scaleX(0.8766);left:857.25px;">Sun</div>
<div class="t" style="top:271.75px;line-height:16px;font-size:11.7px;color:#444;transform:scaleX(0.9538);left:1017.25px;">Dinner</div>
<div class="t" style="top:271.75px;line-height:16px;font-size:11.7px;color:#444;transform:scaleX(0.9231);font-style:italic;left:1323.87px;">2</div>
<div style="left:184.25px;top:310.88px;width:29.25px;height:1px;background:#c6c6c6;"></div>
<div style="left:213.5px;top:310.88px;width:1120px;height:1px;background:#dcdcdc;"></div>
<div class="t" style="top:293.88px;line-height:16px;font-size:12.6px;color:#505050;left:195.50px;-webkit-text-stroke-width:0.1px;">5</div>
<div class="t" style="top:292.75px;line-height:16px;font-size:11.7px;color:#444;transform:scaleX(0.9231);font-style:italic;left:342.85px;">24.59</div>
<div class="t" style="top:292.75px;line-height:16px;font-size:11.7px;color:#444;transform:scaleX(0.9231);font-style:italic;left:508.85px;">3.61</div>
<div class="t" style="top:292.75px;line-height:16px;font-size:11.7px;color:#444;transform:scaleX(0.9035);left:537.25px;">Female</div>
<div class="t" style="top:292.75px;line-height:16px;font-size:11.7px;color:#444;transform:scaleX(0.9444);left:697.25px;">No</div>
<div class="t" style="top:292.75px;line-height:16px;font-size:11.7px;color:#444;transform:scaleX(0.8766);left:857.25px;">Sun</div>
<div class="t" style="top:292.75px;line-height:16px;font-size:11.7px;color:#444;transform:scaleX(0.9538);left:1017.25px;">Dinner</div>
<div class="t" style="top:292.75px;line-height:16px;font-size:11.7px;color:#444;transform:scaleX(0.9231);font-style:italic;left:1323.87px;">4</div>
<div style="left:184.25px;top:331.88px;width:29.25px;height:1px;background:#c6c6c6;"></div>
<div style="left:213.5px;top:331.88px;width:1120px;height:1px;background:#dcdcdc;"></div>
<div class="t" style="top:314.87px;line-height:16px;font-size:12.6px;color:#505050;left:195.50px;-webkit-text-stroke-width:0.1px;">6</div>
<div class="t" style="top:313.75px;line-height:16px;font-size:11.7px;color:#444;transform:scaleX(0.9231);font-style:italic;left:342.85px;">25.29</div>
<div class="t" style="top:313.75px;line-height:16px;font-size:11.7px;color:#444;transform:scaleX(0.9231);font-style:italic;left:508.85px;">4.71</div>
<div class="t" style="top:313.75px;line-height:16px;font-size:11.7px;color:#444;transform:scaleX(0.9760);left:537.25px;">Male</div>
<div class="t" style="top:313.75px;line-height:16px;font-size:11.7px;color:#444;transform:scaleX(0.9444);left:697.25px;">No</div>
<div class="t" style="top:313.75px;line-height:16px;font-size:11.7px;color:#444;transform:scaleX(0.8766);left:857.25px;">Sun</div>
<div class="t" style="top:313.75px;line-height:16px;font-size:11.7px;color:#444;transform:scaleX(0.9538);left:1017.25px;">Dinner</div>
<div class="t" style="top:313.75px;line-height:16px;font-size:11.7px;color:#444;transform:scaleX(0.9231);font-style:italic;left:1323.87px;">4</div>
<div style="left:184.25px;top:352.88px;width:29.25px;height:1px;background:#c6c6c6;"></div>
<div style="left:213.5px;top:352.88px;width:1120px;height:1px;background:#dcdcdc;"></div>
<div class="t" style="top:335.87px;line-height:16px;font-size:12.6px;color:#505050;left:195.50px;-webkit-text-stroke-width:0.1px;">7</div>
<div class="t" style="top:334.75px;line-height:16px;font-size:11.7px;color:#444;transform:scaleX(0.9231);font-style:italic;left:348.85px;">8.77</div>
<div class="t" style="top:334.75px;line-height:16px;font-size:11.7px;color:#444;transform:scaleX(0.9231);font-style:italic;left:523.87px;">2</div>
<div class="t" style="top:334.75px;line-height:16px;font-size:11.7px;color:#444;transform:scaleX(0.9760);left:537.25px;">Male</div>
<div class="t" style="top:334.75px;line-height:16px;font-size:11.7px;color:#444;transform:scaleX(0.9444);left:697.25px;">No</div>
<div class="t" style="top:334.75px;line-height:16px;font-size:11.7px;color:#444;transform:scaleX(0.8766);left:857.25px;">Sun</div>
<div class="t" style="top:334.75px;line-height:16px;font-size:11.7px;color:#444;transform:scaleX(0.9538);left:1017.25px;">Dinner</div>
<div class="t" style="top:334.75px;line-height:16px;font-size:11.7px;color:#444;transform:scaleX(0.9231);font-style:italic;left:1323.87px;">2</div>
<div style="left:184.25px;top:373.88px;width:29.25px;height:1px;background:#c6c6c6;"></div>
<div style="left:213.5px;top:373.88px;width:1120px;height:1px;background:#dcdcdc;"></div>
<div class="t" style="top:356.88px;line-height:16px;font-size:12.6px;color:#505050;left:195.50px;-webkit-text-stroke-width:0.1px;">8</div>
<div class="t" style="top:355.75px;line-height:16px;font-size:11.7px;color:#444;transform:scaleX(0.9231);font-style:italic;left:342.85px;">26.88</div>
<div class="t" style="top:355.75px;line-height:16px;font-size:11.7px;color:#444;transform:scaleX(0.9231);font-style:italic;left:508.85px;">3.12</div>
<div class="t" style="top:355.75px;line-height:16px;font-size:11.7px;color:#444;transform:scaleX(0.9760);left:537.25px;">Male</div>
<div class="t" style="top:355.75px;line-height:16px;font-size:11.7px;color:#444;transform:scaleX(0.9444);left:697.25px;">No</div>
<div class="t" style="top:355.75px;line-height:16px;font-size:11.7px;color:#444;transform:scaleX(0.8766);left:857.25px;">Sun</div>
<div class="t" style="top:355.75px;line-height:16px;font-size:11.7px;color:#444;transform:scaleX(0.9538);left:1017.25px;">Dinner</div>
<div class="t" style="top:355.75px;line-height:16px;font-size:11.7px;color:#444;transform:scaleX(0.9231);font-style:italic;left:1323.87px;">4</div>
<div style="left:184.25px;top:394.88px;width:29.25px;height:1px;background:#c6c6c6;"></div>
<div style="left:213.5px;top:394.88px;width:1120px;height:1px;background:#dcdcdc;"></div>
<div class="t" style="top:377.88px;line-height:16px;font-size:12.6px;color:#505050;left:195.50px;-webkit-text-stroke-width:0.1px;">9</div>
<div class="t" style="top:376.75px;line-height:16px;font-size:11.7px;color:#444;transform:scaleX(0.9231);font-style:italic;left:342.85px;">15.04</div>
<div class="t" style="top:376.75px;line-height:16px;font-size:11.7px;color:#444;transform:scaleX(0.9231);font-style:italic;left:508.85px;">1.96</div>
<div class="t" style="top:376.75px;line-height:16px;font-size:11.7px;color:#444;transform:scaleX(0.9760);left:537.25px;">Male</div>
<div class="t" style="top:376.75px;line-height:16px;font-size:11.7px;color:#444;transform:scaleX(0.9444);left:697.25px;">No</div>
<div class="t" style="top:376.75px;line-height:16px;font-size:11.7px;color:#444;transform:scaleX(0.8766);left:857.25px;">Sun</div>
<div class="t" style="top:376.75px;line-height:16px;font-size:11.7px;color:#444;transform:scaleX(0.9538);left:1017.25px;">Dinner</div>
<div class="t" style="top:376.75px;line-height:16px;font-size:11.7px;color:#444;transform:scaleX(0.9231);font-style:italic;left:1323.87px;">2</div>
<div style="left:184.25px;top:415.88px;width:29.25px;height:1px;background:#c6c6c6;"></div>
<div style="left:213.5px;top:415.88px;width:1120px;height:1px;background:#dcdcdc;"></div>
<div class="t" style="top:398.88px;line-height:16px;font-size:12.6px;color:#505050;letter-spacing:-0.500px;left:192.49px;-webkit-text-stroke-width:0.1px;">10</div>
<div class="t" style="top:397.75px;line-height:16px;font-size:11.7px;color:#444;transform:scaleX(0.9231);font-style:italic;left:342.85px;">14.78</div>
<div class="t" style="top:397.75px;line-height:16px;font-size:11.7px;color:#444;transform:scaleX(0.9231);font-style:italic;left:508.85px;">3.23</div>
<div class="t" style="top:397.75px;line-height:16px;font-size:11.7px;color:#444;transform:scaleX(0.9760);left:537.25px;">Male</div>
<div class="t" style="top:397.75px;line-height:16px;font-size:11.7px;color:#444;transform:scaleX(0.9444);left:697.25px;">No</div>
<div class="t" style="top:397.75px;line-height:16px;font-size:11.7px;color:#444;transform:scaleX(0.8766);left:857.25px;">Sun</div>
<div class="t" style="top:397.75px;line-height:16px;font-size:11.7px;color:#444;transform:scaleX(0.9538);left:1017.25px;">Dinner</div>
<div class="t" style="top:397.75px;line-height:16px;font-size:11.7px;color:#444;transform:scaleX(0.9231);font-style:italic;left:1323.87px;">2</div>
<div style="left:184.25px;top:436.88px;width:29.25px;height:1px;background:#c6c6c6;"></div>
<div style="left:213.5px;top:436.88px;width:1120px;height:1px;background:#dcdcdc;"></div>
<div class="t" style="top:419.88px;line-height:16px;font-size:12.6px;color:#505050;letter-spacing:-0.500px;left:192.96px;-webkit-text-stroke-width:0.1px;">11</div>
<div class="t" style="top:418.75px;line-height:16px;font-size:11.7px;color:#444;transform:scaleX(0.9231);font-style:italic;left:342.85px;">10.27</div>
<div class="t" style="top:418.75px;line-height:16px;font-size:11.7px;color:#444;transform:scaleX(0.9231);font-style:italic;left:508.85px;">1.71</div>
<div class="t" style="top:418.75px;line-height:16px;font-size:11.7px;color:#444;transform:scaleX(0.9760);left:537.25px;">Male</div>
<div class="t" style="top:418.75px;line-height:16px;font-size:11.7px;color:#444;transform:scaleX(0.9444);left:697.25px;">No</div>
<div class="t" style="top:418.75px;line-height:16px;font-size:11.7px;color:#444;transform:scaleX(0.8766);left:857.25px;">Sun</div>
<div class="t" style="top:418.75px;line-height:16px;font-size:11.7px;color:#444;transform:scaleX(0.9538);left:1017.25px;">Dinner</div>
<div class="t" style="top:418.75px;line-height:16px;font-size:11.7px;color:#444;transform:scaleX(0.9231);font-style:italic;left:1323.87px;">2</div>
<div style="left:184.25px;top:457.88px;width:29.25px;height:1px;background:#c6c6c6;"></div>
<div style="left:213.5px;top:457.88px;width:1120px;height:1px;background:#dcdcdc;"></div>
<div class="t" style="top:440.87px;line-height:16px;font-size:12.6px;color:#505050;letter-spacing:-0.500px;left:192.49px;-webkit-text-stroke-width:0.1px;">12</div>
<div class="t" style="top:439.75px;line-height:16px;font-size:11.7px;color:#444;transform:scaleX(0.9231);font-style:italic;left:342.85px;">35.26</div>
<div class="t" style="top:439.75px;line-height:16px;font-size:11.7px;color:#444;transform:scaleX(0.9231);font-style:italic;left:523.87px;">5</div>
<div class="t" style="top:439.75px;line-height:16px;font-size:11.7px;color:#444;transform:scaleX(0.9035);left:537.25px;">Female</div>
<div class="t" style="top:439.75px;line-height:16px;font-size:11.7px;color:#444;transform:scaleX(0.9444);left:697.25px;">No</div>
<div class="t" style="top:439.75px;line-height:16px;font-size:11.7px;color:#444;transform:scaleX(0.8766);left:857.25px;">Sun</div>
<div class="t" style="top:439.75px;line-height:16px;font-size:11.7px;color:#444;transform:scaleX(0.9538);left:1017.25px;">Dinner</div>
<div class="t" style="top:439.75px;line-height:16px;font-size:11.7px;color:#444;transform:scaleX(0.9231);font-style:italic;left:1323.87px;">4</div>
<div style="left:184.25px;top:478.88px;width:29.25px;height:1px;background:#c6c6c6;"></div>
<div style="left:213.5px;top:478.88px;width:1120px;height:1px;background:#dcdcdc;"></div>
<div class="t" style="top:461.88px;line-height:16px;font-size:12.6px;color:#505050;letter-spacing:-0.500px;left:192.49px;-webkit-text-stroke-width:0.1px;">13</div>
<div class="t" style="top:460.75px;line-height:16px;font-size:11.7px;color:#444;transform:scaleX(0.9231);font-style:italic;left:342.85px;">15.42</div>
<div class="t" style="top:460.75px;line-height:16px;font-size:11.7px;color:#444;transform:scaleX(0.9231);font-style:italic;left:508.85px;">1.57</div>
<div class="t" style="top:460.75px;line-height:16px;font-size:11.7px;color:#444;transform:scaleX(0.9760);left:537.25px;">Male</div>
<div class="t" style="top:460.75px;line-height:16px;font-size:11.7px;color:#444;transform:scaleX(0.9444);left:697.25px;">No</div>
<div class="t" style="top:460.75px;line-height:16px;font-size:11.7px;color:#444;transform:scaleX(0.8766);left:857.25px;">Sun</div>
<div class="t" style="top:460.75px;line-height:16px;font-size:11.7px;color:#444;transform:scaleX(0.9538);left:1017.25px;">Dinner</div>
<div class="t" style="top:460.75px;line-height:16px;font-size:11.7px;color:#444;transform:scaleX(0.9231);font-style:italic;left:1323.87px;">2</div>
<div style="left:184.25px;top:499.88px;width:29.25px;height:1px;background:#c6c6c6;"></div>
<div style="left:213.5px;top:499.88px;width:1120px;height:1px;background:#dcdcdc;"></div>
<div class="t" style="top:482.88px;line-height:16px;font-size:12.6px;color:#505050;letter-spacing:-0.500px;left:192.49px;-webkit-text-stroke-width:0.1px;">14</div>
<div class="t" style="top:481.75px;line-height:16px;font-size:11.7px;color:#444;transform:scaleX(0.9231);font-style:italic;left:342.85px;">18.43</div>
<div class="t" style="top:481.75px;line-height:16px;font-size:11.7px;color:#444;transform:scaleX(0.9231);font-style:italic;left:523.87px;">3</div>
<div class="t" style="top:481.75px;line-height:16px;font-size:11.7px;color:#444;transform:scaleX(0.9760);left:537.25px;">Male</div>
<div class="t" style="top:481.75px;line-height:16px;font-size:11.7px;color:#444;transform:scaleX(0.9444);left:697.25px;">No</div>
<div class="t" style="top:481.75px;line-height:16px;font-size:11.7px;color:#444;transform:scaleX(0.8766);left:857.25px;">Sun</div>
<div class="t" style="top:481.75px;line-height:16px;font-size:11.7px;color:#444;transform:scaleX(0.9538);left:1017.25px;">Dinner</div>
<div class="t" style="top:481.75px;line-height:16px;font-size:11.7px;color:#444;transform:scaleX(0.9231);font-style:italic;left:1323.87px;">4</div>
<div style="left:184.25px;top:520.88px;width:29.25px;height:1px;background:#c6c6c6;"></div>
<div style="left:213.5px;top:520.88px;width:1120px;height:1px;background:#dcdcdc;"></div>
<div class="t" style="top:503.88px;line-height:16px;font-size:12.6px;color:#505050;letter-spacing:-0.500px;left:192.49px;-webkit-text-stroke-width:0.1px;">15</div>
<div class="t" style="top:502.75px;line-height:16px;font-size:11.7px;color:#444;transform:scaleX(0.9231);font-style:italic;left:342.85px;">14.83</div>
<div class="t" style="top:502.75px;line-height:16px;font-size:11.7px;color:#444;transform:scaleX(0.9231);font-style:italic;left:508.85px;">3.02</div>
<div class="t" style="top:502.75px;line-height:16px;font-size:11.7px;color:#444;transform:scaleX(0.9035);left:537.25px;">Female</div>
<div class="t" style="top:502.75px;line-height:16px;font-size:11.7px;color:#444;transform:scaleX(0.9444);left:697.25px;">No</div>
<div class="t" style="top:502.75px;line-height:16px;font-size:11.7px;color:#444;transform:scaleX(0.8766);left:857.25px;">Sun</div>
<div class="t" style="top:502.75px;line-height:16px;font-size:11.7px;color:#444;transform:scaleX(0.9538);left:1017.25px;">Dinner</div>
<div class="t" style="top:502.75px;line-height:16px;font-size:11.7px;color:#444;transform:scaleX(0.9231);font-style:italic;left:1323.87px;">2</div>
<div style="left:184.25px;top:541.88px;width:29.25px;height:1px;background:#c6c6c6;"></div>
<div style="left:213.5px;top:541.88px;width:1120px;height:1px;background:#dcdcdc;"></div>
<div class="t" style="top:524.88px;line-height:16px;font-size:12.6px;color:#505050;letter-spacing:-0.500px;left:192.49px;-webkit-text-stroke-width:0.1px;">16</div>
<div class="t" style="top:523.75px;line-height:16px;font-size:11.7px;color:#444;transform:scaleX(0.9231);font-style:italic;left:342.85px;">21.58</div>
<div class="t" style="top:523.75px;line-height:16px;font-size:11.7px;color:#444;transform:scaleX(0.9231);font-style:italic;left:508.85px;">3.92</div>
<div class="t" style="top:523.75px;line-height:16px;font-size:11.7px;color:#444;transform:scaleX(0.9760);left:537.25px;">Male</div>
<div class="t" style="top:523.75px;line-height:16px;font-size:11.7px;color:#444;transform:scaleX(0.9444);left:697.25px;">No</div>
<div class="t" style="top:523.75px;line-height:16px;font-size:11.7px;color:#444;transform:scaleX(0.8766);left:857.25px;">Sun</div>
<div class="t" style="top:523.75px;line-height:16px;font-size:11.7px;color:#444;transform:scaleX(0.9538);left:1017.25px;">Dinner</div>
<div class="t" style="top:523.75px;line-height:16px;font-size:11.7px;color:#444;transform:scaleX(0.9231);font-style:italic;left:1323.87px;">2</div>
<div style="left:184.25px;top:562.88px;width:29.25px;height:1px;background:#c6c6c6;"></div>
<div style="left:213.5px;top:562.88px;width:1120px;height:1px;background:#dcdcdc;"></div>
<div class="t" style="top:545.88px;line-height:16px;font-size:12.6px;color:#505050;letter-spacing:-0.500px;left:192.49px;-webkit-text-stroke-width:0.1px;">17</div>
<div class="t" style="top:544.75px;line-height:16px;font-size:11.7px;color:#444;transform:scaleX(0.9231);font-style:italic;left:342.85px;">10.33</div>
<div class="t" style="top:544.75px;line-height:16px;font-size:11.7px;color:#444;transform:scaleX(0.9231);font-style:italic;left:508.85px;">1.67</div>
<div class="t" style="top:544.75px;line-height:16px;font-size:11.7px;color:#444;transform:scaleX(0.9035);left:537.25px;">Female</div>
<div class="t" style="top:544.75px;line-height:16px;font-size:11.7px;color:#444;transform:scaleX(0.9444);left:697.25px;">No</div>
<div class="t" style="top:544.75px;line-height:16px;font-size:11.7px;color:#444;transform:scaleX(0.8766);left:857.25px;">Sun</div>
<div class="t" style="top:544.75px;line-height:16px;font-size:11.7px;color:#444;transform:scaleX(0.9538);left:1017.25px;">Dinner</div>
<div class="t" style="top:544.75px;line-height:16px;font-size:11.7px;color:#444;transform:scaleX(0.9231);font-style:italic;left:1323.87px;">3</div>
<div style="left:184.25px;top:583.88px;width:29.25px;height:1px;background:#c6c6c6;"></div>
<div style="left:213.5px;top:583.88px;width:1120px;height:1px;background:#dcdcdc;"></div>
<div class="t" style="top:566.88px;line-height:16px;font-size:12.6px;color:#505050;letter-spacing:-0.500px;left:192.49px;-webkit-text-stroke-width:0.1px;">18</div>
<div class="t" style="top:565.75px;line-height:16px;font-size:11.7px;color:#444;transform:scaleX(0.9231);font-style:italic;left:342.85px;">16.29</div>
<div class="t" style="top:565.75px;line-height:16px;font-size:11.7px;color:#444;transform:scaleX(0.9231);font-style:italic;left:508.85px;">3.71</div>
<div class="t" style="top:565.75px;line-height:16px;font-size:11.7px;color:#444;transform:scaleX(0.9760);left:537.25px;">Male</div>
<div class="t" style="top:565.75px;line-height:16px;font-size:11.7px;color:#444;transform:scaleX(0.9444);left:697.25px;">No</div>
<div class="t" style="top:565.75px;line-height:16px;font-size:11.7px;color:#444;transform:scaleX(0.8766);left:857.25px;">Sun</div>
<div class="t" style="top:565.75px;line-height:16px;font-size:11.7px;color:#444;transform:scaleX(0.9538);left:1017.25px;">Dinner</div>
<div class="t" style="top:565.75px;line-height:16px;font-size:11.7px;color:#444;transform:scaleX(0.9231);font-style:italic;left:1323.87px;">3</div>
<div style="left:184.25px;top:604.88px;width:29.25px;height:1px;background:#c6c6c6;"></div>
<div style="left:213.5px;top:604.88px;width:1120px;height:1px;background:#dcdcdc;"></div>
<div class="t" style="top:587.88px;line-height:16px;font-size:12.6px;color:#505050;letter-spacing:-0.500px;left:192.49px;-webkit-text-stroke-width:0.1px;">19</div>
<div class="t" style="top:586.75px;line-height:16px;font-size:11.7px;color:#444;transform:scaleX(0.9231);font-style:italic;left:342.85px;">16.97</div>
<div class="t" style="top:586.75px;line-height:16px;font-size:11.7px;color:#444;transform:scaleX(0.9231);font-style:italic;left:514.86px;">3.5</div>
<div class="t" style="top:586.75px;line-height:16px;font-size:11.7px;color:#444;transform:scaleX(0.9035);left:537.25px;">Female</div>
<div class="t" style="top:586.75px;line-height:16px;font-size:11.7px;color:#444;transform:scaleX(0.9444);left:697.25px;">No</div>
<div class="t" style="top:586.75px;line-height:16px;font-size:11.7px;color:#444;transform:scaleX(0.8766);left:857.25px;">Sun</div>
<div class="t" style="top:586.75px;line-height:16px;font-size:11.7px;color:#444;transform:scaleX(0.9538);left:1017.25px;">Dinner</div>
<div class="t" style="top:586.75px;line-height:16px;font-size:11.7px;color:#444;transform:scaleX(0.9231);font-style:italic;left:1323.87px;">3</div>
<div style="left:184.25px;top:625.88px;width:29.25px;height:1px;background:#c6c6c6;"></div>
<div style="left:213.5px;top:625.88px;width:1120px;height:1px;background:#dcdcdc;"></div>
<div class="t" style="top:608.87px;line-height:16px;font-size:12.6px;color:#505050;letter-spacing:-0.500px;left:192.49px;-webkit-text-stroke-width:0.1px;">20</div>
<div class="t" style="top:607.75px;line-height:16px;font-size:11.7px;color:#444;transform:scaleX(0.9231);font-style:italic;left:342.85px;">20.65</div>
<div class="t" style="top:607.75px;line-height:16px;font-size:11.7px;color:#444;transform:scaleX(0.9231);font-style:italic;left:508.85px;">3.35</div>
<div class="t" style="top:607.75px;line-height:16px;font-size:11.7px;color:#444;transform:scaleX(0.9760);left:537.25px;">Male</div>
<div class="t" style="top:607.75px;line-height:16px;font-size:11.7px;color:#444;transform:scaleX(0.9444);left:697.25px;">No</div>
<div class="t" style="top:607.75px;line-height:16px;font-size:11.7px;color:#444;transform:scaleX(0.8968);left:857.25px;">Sat</div>
<div class="t" style="top:607.75px;line-height:16px;font-size:11.7px;color:#444;transform:scaleX(0.9538);left:1017.25px;">Dinner</div>
<div class="t" style="top:607.75px;line-height:16px;font-size:11.7px;color:#444;transform:scaleX(0.9231);font-style:italic;left:1323.87px;">3</div>
<div style="left:184.25px;top:646.88px;width:29.25px;height:1px;background:#c6c6c6;"></div>
<div style="left:213.5px;top:646.88px;width:1120px;height:1px;background:#dcdcdc;"></div>
<div class="t" style="top:629.88px;line-height:16px;font-size:12.6px;color:#505050;letter-spacing:-0.500px;left:192.49px;-webkit-text-stroke-width:0.1px;">21</div>
<div class="t" style="top:628.75px;line-height:16px;font-size:11.7px;color:#444;transform:scaleX(0.9231);font-style:italic;left:342.85px;">17.92</div>
<div class="t" style="top:628.75px;line-height:16px;font-size:11.7px;color:#444;transform:scaleX(0.9231);font-style:italic;left:508.85px;">4.08</div>
<div class="t" style="top:628.75px;line-height:16px;font-size:11.7px;color:#444;transform:scaleX(0.9760);left:537.25px;">Male</div>
<div class="t" style="top:628.75px;line-height:16px;font-size:11.7px;color:#444;transform:scaleX(0.9444);left:697.25px;">No</div>
<div class="t" style="top:628.75px;line-height:16px;font-size:11.7px;color:#444;transform:scaleX(0.8968);left:857.25px;">Sat</div>
<div class="t" style="top:628.75px;line-height:16px;font-size:11.7px;color:#444;transform:scaleX(0.9538);left:1017.25px;">Dinner</div>
<div class="t" style="top:628.75px;line-height:16px;font-size:11.7px;color:#444;transform:scaleX(0.9231);font-style:italic;left:1323.87px;">2</div>
<div style="left:184.25px;top:667.88px;width:29.25px;height:1px;background:#c6c6c6;"></div>
<div style="left:213.5px;top:667.88px;width:1120px;height:1px;background:#dcdcdc;"></div>
<div class="t" style="top:650.87px;line-height:16px;font-size:12.6px;color:#505050;letter-spacing:-0.500px;left:192.49px;-webkit-text-stroke-width:0.1px;">22</div>
<div class="t" style="top:649.75px;line-height:16px;font-size:11.7px;color:#444;transform:scaleX(0.9231);font-style:italic;left:342.85px;">20.29</div>
<div class="t" style="top:649.75px;line-height:16px;font-size:11.7px;color:#444;transform:scaleX(0.9231);font-style:italic;left:508.85px;">2.75</div>
<div class="t" style="top:649.75px;line-height:16px;font-size:11.7px;color:#444;transform:scaleX(0.9035);left:537.25px;">Female</div>
<div class="t" style="top:649.75px;line-height:16px;font-size:11.7px;color:#444;transform:scaleX(0.9444);left:697.25px;">No</div>
<div class="t" style="top:649.75px;line-height:16px;font-size:11.7px;color:#444;transform:scaleX(0.8968);left:857.25px;">Sat</div>
<div class="t" style="top:649.75px;line-height:16px;font-size:11.7px;color:#444;transform:scaleX(0.9538);left:1017.25px;">Dinner</div>
<div class="t" style="top:649.75px;line-height:16px;font-size:11.7px;color:#444;transform:scaleX(0.9231);font-style:italic;left:1323.87px;">2</div>
<div style="left:184.25px;top:688.88px;width:29.25px;height:1px;background:#c6c6c6;"></div>
<div style="left:213.5px;top:688.88px;width:1120px;height:1px;background:#dcdcdc;"></div>
<div class="t" style="top:671.88px;line-height:16px;font-size:12.6px;color:#505050;letter-spacing:-0.500px;left:192.49px;-webkit-text-stroke-width:0.1px;">23</div>
<div class="t" style="top:670.75px;line-height:16px;font-size:11.7px;color:#444;transform:scaleX(0.9231);font-style:italic;left:342.85px;">15.77</div>
<div class="t" style="top:670.75px;line-height:16px;font-size:11.7px;color:#444;transform:scaleX(0.9231);font-style:italic;left:508.85px;">2.23</div>
<div class="t" style="top:670.75px;line-height:16px;font-size:11.7px;color:#444;transform:scaleX(0.9035);left:537.25px;">Female</div>
<div class="t" style="top:670.75px;line-height:16px;font-size:11.7px;color:#444;transform:scaleX(0.9444);left:697.25px;">No</div>
<div class="t" style="top:670.75px;line-height:16px;font-size:11.7px;color:#444;transform:scaleX(0.8968);left:857.25px;">Sat</div>
<div class="t" style="top:670.75px;line-height:16px;font-size:11.7px;color:#444;transform:scaleX(0.9538);left:1017.25px;">Dinner</div>
<div class="t" style="top:670.75px;line-height:16px;font-size:11.7px;color:#444;transform:scaleX(0.9231);font-style:italic;left:1323.87px;">2</div>
<div style="left:184.25px;top:709.88px;width:29.25px;height:1px;background:#c6c6c6;"></div>
<div style="left:213.5px;top:709.88px;width:1120px;height:1px;background:#dcdcdc;"></div>
<div class="t" style="top:692.87px;line-height:16px;font-size:12.6px;color:#505050;letter-spacing:-0.500px;left:192.49px;-webkit-text-stroke-width:0.1px;">24</div>
<div class="t" style="top:691.75px;line-height:16px;font-size:11.7px;color:#444;transform:scaleX(0.9231);font-style:italic;left:342.85px;">39.42</div>
<div class="t" style="top:691.75px;line-height:16px;font-size:11.7px;color:#444;transform:scaleX(0.9231);font-style:italic;left:508.85px;">7.58</div>
<div class="t" style="top:691.75px;line-height:16px;font-size:11.7px;color:#444;transform:scaleX(0.9760);left:537.25px;">Male</div>
<div class="t" style="top:691.75px;line-height:16px;font-size:11.7px;color:#444;transform:scaleX(0.9444);left:697.25px;">No</div>
<div class="t" style="top:691.75px;line-height:16px;font-size:11.7px;color:#444;transform:scaleX(0.8968);left:857.25px;">Sat</div>
<div class="t" style="top:691.75px;line-height:16px;font-size:11.7px;color:#444;transform:scaleX(0.9538);left:1017.25px;">Dinner</div>
<div class="t" style="top:691.75px;line-height:16px;font-size:11.7px;color:#444;transform:scaleX(0.9231);font-style:italic;left:1323.87px;">4</div>
<div style="left:184.25px;top:730.88px;width:29.25px;height:1px;background:#c6c6c6;"></div>
<div style="left:213.5px;top:730.88px;width:1120px;height:1px;background:#dcdcdc;"></div>
<div class="t" style="top:713.88px;line-height:16px;font-size:12.6px;color:#505050;letter-spacing:-0.500px;left:192.49px;-webkit-text-stroke-width:0.1px;">25</div>
<div class="t" style="top:712.75px;line-height:16px;font-size:11.7px;color:#444;transform:scaleX(0.9231);font-style:italic;left:342.85px;">19.82</div>
<div class="t" style="top:712.75px;line-height:16px;font-size:11.7px;color:#444;transform:scaleX(0.9231);font-style:italic;left:508.85px;">3.18</div>
<div class="t" style="top:712.75px;line-height:16px;font-size:11.7px;color:#444;transform:scaleX(0.9760);left:537.25px;">Male</div>
<div class="t" style="top:712.75px;line-height:16px;font-size:11.7px;color:#444;transform:scaleX(0.9444);left:697.25px;">No</div>
<div class="t" style="top:712.75px;line-height:16px;font-size:11.7px;color:#444;transform:scaleX(0.8968);left:857.25px;">Sat</div>
<div class="t" style="top:712.75px;line-height:16px;font-size:11.7px;color:#444;transform:scaleX(0.9538);left:1017.25px;">Dinner</div>
<div class="t" style="top:712.75px;line-height:16px;font-size:11.7px;color:#444;transform:scaleX(0.9231);font-style:italic;left:1323.87px;">2</div>
<div style="left:184.25px;top:751.88px;width:29.25px;height:1px;background:#c6c6c6;"></div>
<div style="left:213.5px;top:751.88px;width:1120px;height:1px;background:#dcdcdc;"></div>
<div class="t" style="top:734.88px;line-height:16px;font-size:12.6px;color:#505050;letter-spacing:-0.500px;left:192.49px;-webkit-text-stroke-width:0.1px;">26</div>
<div class="t" style="top:733.75px;line-height:16px;font-size:11.7px;color:#444;transform:scaleX(0.9231);font-style:italic;left:342.85px;">17.81</div>
<div class="t" style="top:733.75px;line-height:16px;font-size:11.7px;color:#444;transform:scaleX(0.9231);font-style:italic;left:508.85px;">2.34</div>
<div class="t" style="top:733.75px;line-height:16px;font-size:11.7px;color:#444;transform:scaleX(0.9760);left:537.25px;">Male</div>
<div class="t" style="top:733.75px;line-height:16px;font-size:11.7px;color:#444;transform:scaleX(0.9444);left:697.25px;">No</div>
<div class="t" style="top:733.75px;line-height:16px;font-size:11.7px;color:#444;transform:scaleX(0.8968);left:857.25px;">Sat</div>
<div class="t" style="top:733.75px;line-height:16px;font-size:11.7px;color:#444;transform:scaleX(0.9538);left:1017.25px;">Dinner</div>
<div class="t" style="top:733.75px;line-height:16px;font-size:11.7px;color:#444;transform:scaleX(0.9231);font-style:italic;left:1323.87px;">4</div>
<div style="left:184.25px;top:772.88px;width:29.25px;height:1px;background:#c6c6c6;"></div>
<div style="left:213.5px;top:772.88px;width:1120px;height:1px;background:#dcdcdc;"></div>
<div class="t" style="top:755.87px;line-height:16px;font-size:12.6px;color:#505050;letter-spacing:-0.500px;left:192.49px;-webkit-text-stroke-width:0.1px;">27</div>
<div class="t" style="top:754.75px;line-height:16px;font-size:11.7px;color:#444;transform:scaleX(0.9231);font-style:italic;left:342.85px;">13.37</div>
<div class="t" style="top:754.75px;line-height:16px;font-size:11.7px;color:#444;transform:scaleX(0.9231);font-style:italic;left:523.87px;">2</div>
<div class="t" style="top:754.75px;line-height:16px;font-size:11.7px;color:#444;transform:scaleX(0.9760);left:537.25px;">Male</div>
<div class="t" style="top:754.75px;line-height:16px;font-size:11.7px;color:#444;transform:scaleX(0.9444);left:697.25px;">No</div>
<div class="t" style="top:754.75px;line-height:16px;font-size:11.7px;color:#444;transform:scaleX(0.8968);left:857.25px;">Sat</div>
<div class="t" style="top:754.75px;line-height:16px;font-size:11.7px;color:#444;transform:scaleX(0.9538);left:1017.25px;">Dinner</div>
<div class="t" style="top:754.75px;line-height:16px;font-size:11.7px;color:#444;transform:scaleX(0.9231);font-style:italic;left:1323.87px;">2</div>
<div style="left:184.25px;top:793.88px;width:29.25px;height:1px;background:#c6c6c6;"></div>
<div style="left:213.5px;top:793.88px;width:1120px;height:1px;background:#dcdcdc;"></div>
<div class="t" style="top:776.88px;line-height:16px;font-size:12.6px;color:#505050;letter-spacing:-0.500px;left:192.49px;-webkit-text-stroke-width:0.1px;">28</div>
<div class="t" style="top:775.75px;line-height:16px;font-size:11.7px;color:#444;transform:scaleX(0.9231);font-style:italic;left:342.85px;">12.69</div>
<div class="t" style="top:775.75px;line-height:16px;font-size:11.7px;color:#444;transform:scaleX(0.9231);font-style:italic;left:523.87px;">2</div>
<div class="t" style="top:775.75px;line-height:16px;font-size:11.7px;color:#444;transform:scaleX(0.9760);left:537.25px;">Male</div>
<div class="t" style="top:775.75px;line-height:16px;font-size:11.7px;color:#444;transform:scaleX(0.9444);left:697.25px;">No</div>
<div class="t" style="top:775.75px;line-height:16px;font-size:11.7px;color:#444;transform:scaleX(0.8968);left:857.25px;">Sat</div>
<div class="t" style="top:775.75px;line-height:16px;font-size:11.7px;color:#444;transform:scaleX(0.9538);left:1017.25px;">Dinner</div>
<div class="t" style="top:775.75px;line-height:16px;font-size:11.7px;color:#444;transform:scaleX(0.9231);font-style:italic;left:1323.87px;">2</div>
<div style="left:184.25px;top:814.88px;width:29.25px;height:1px;background:#c6c6c6;"></div>
<div style="left:213.5px;top:814.88px;width:1120px;height:1px;background:#dcdcdc;"></div>
<div class="t" style="top:797.87px;line-height:16px;font-size:12.6px;color:#505050;letter-spacing:-0.500px;left:192.49px;-webkit-text-stroke-width:0.1px;">29</div>
<div class="t" style="top:796.75px;line-height:16px;font-size:11.7px;color:#444;transform:scaleX(0.9231);font-style:italic;left:348.85px;">21.7</div>
<div class="t" style="top:796.75px;line-height:16px;font-size:11.7px;color:#444;transform:scaleX(0.9231);font-style:italic;left:514.86px;">4.3</div>
<div class="t" style="top:796.75px;line-height:16px;font-size:11.7px;color:#444;transform:scaleX(0.9760);left:537.25px;">Male</div>
<div class="t" style="top:796.75px;line-height:16px;font-size:11.7px;color:#444;transform:scaleX(0.9444);left:697.25px;">No</div>
<div class="t" style="top:796.75px;line-height:16px;font-size:11.7px;color:#444;transform:scaleX(0.8968);left:857.25px;">Sat</div>
<div class="t" style="top:796.75px;line-height:16px;font-size:11.7px;color:#444;transform:scaleX(0.9538);left:1017.25px;">Dinner</div>
<div class="t" style="top:796.75px;line-height:16px;font-size:11.7px;color:#444;transform:scaleX(0.9231);font-style:italic;left:1323.87px;">2</div>
<div style="left:184.25px;top:835.88px;width:29.25px;height:1px;background:#c6c6c6;"></div>
<div style="left:213.5px;top:835.88px;width:1120px;height:1px;background:#dcdcdc;"></div>
<div class="t" style="top:818.88px;line-height:16px;font-size:12.6px;color:#505050;letter-spacing:-0.500px;left:192.49px;-webkit-text-stroke-width:0.1px;">30</div>
<div class="t" style="top:817.75px;line-height:16px;font-size:11.7px;color:#444;transform:scaleX(0.9231);font-style:italic;left:342.85px;">19.65</div>
<div class="t" style="top:817.75px;line-height:16px;font-size:11.7px;color:#444;transform:scaleX(0.9231);font-style:italic;left:523.87px;">3</div>
<div class="t" style="top:817.75px;line-height:16px;font-size:11.7px;color:#444;transform:scaleX(0.9035);left:537.25px;">Female</div>
<div class="t" style="top:817.75px;line-height:16px;font-size:11.7px;color:#444;transform:scaleX(0.9444);left:697.25px;">No</div>
<div class="t" style="top:817.75px;line-height:16px;font-size:11.7px;color:#444;transform:scaleX(0.8968);left:857.25px;">Sat</div>
<div class="t" style="top:817.75px;line-height:16px;font-size:11.7px;color:#444;transform:scaleX(0.9538);left:1017.25px;">Dinner</div>
<div class="t" style="top:817.75px;line-height:16px;font-size:11.7px;color:#444;transform:scaleX(0.9231);font-style:italic;left:1323.87px;">2</div>
<div style="left:184.25px;top:856.88px;width:29.25px;height:1px;background:#c6c6c6;"></div>
<div style="left:213.5px;top:856.88px;width:1120px;height:1px;background:#dcdcdc;"></div>
<div class="t" style="top:839.88px;line-height:16px;font-size:12.6px;color:#505050;letter-spacing:-0.500px;left:192.49px;-webkit-text-stroke-width:0.1px;">31</div>
<div class="t" style="top:838.75px;line-height:16px;font-size:11.7px;color:#444;transform:scaleX(0.9231);font-style:italic;left:348.85px;">9.55</div>
<div class="t" style="top:838.75px;line-height:16px;font-size:11.7px;color:#444;transform:scaleX(0.9231);font-style:italic;left:508.85px;">1.45</div>
<div class="t" style="top:838.75px;line-height:16px;font-size:11.7px;color:#444;transform:scaleX(0.9760);left:537.25px;">Male</div>
<div class="t" style="top:838.75px;line-height:16px;font-size:11.7px;color:#444;transform:scaleX(0.9444);left:697.25px;">No</div>
<div class="t" style="top:838.75px;line-height:16px;font-size:11.7px;color:#444;transform:scaleX(0.8968);left:857.25px;">Sat</div>
<div class="t" style="top:838.75px;line-height:16px;font-size:11.7px;color:#444;transform:scaleX(0.9538);left:1017.25px;">Dinner</div>
<div class="t" style="top:838.75px;line-height:16px;font-size:11.7px;color:#444;transform:scaleX(0.9231);font-style:italic;left:1323.87px;">2</div>
<div style="left:184.25px;top:877.88px;width:29.25px;height:1px;background:#c6c6c6;"></div>
<div style="left:213.5px;top:877.88px;width:1120px;height:1px;background:#dcdcdc;"></div>
<div class="t" style="top:860.88px;line-height:16px;font-size:12.6px;color:#505050;letter-spacing:-0.500px;left:192.49px;-webkit-text-stroke-width:0.1px;">32</div>
<div class="t" style="top:859.75px;line-height:16px;font-size:11.7px;color:#444;transform:scaleX(0.9231);font-style:italic;left:342.85px;">18.35</div>
<div class="t" style="top:859.75px;line-height:16px;font-size:11.7px;color:#444;transform:scaleX(0.9231);font-style:italic;left:514.86px;">2.5</div>
<div class="t" style="top:859.75px;line-height:16px;font-size:11.7px;color:#444;transform:scaleX(0.9760);left:537.25px;">Male</div>
<div class="t" style="top:859.75px;line-height:16px;font-size:11.7px;color:#444;transform:scaleX(0.9444);left:697.25px;">No</div>
<div class="t" style="top:859.75px;line-height:16px;font-size:11.7px;color:#444;transform:scaleX(0.8968);left:857.25px;">Sat</div>
<div class="t" style="top:859.75px;line-height:16px;font-size:11.7px;color:#444;transform:scaleX(0.9538);left:1017.25px;">Dinner</div>
<div class="t" style="top:859.75px;line-height:16px;font-size:11.7px;color:#444;transform:scaleX(0.9231);font-style:italic;left:1323.87px;">4</div>
<div style="left:184.25px;top:898.88px;width:29.25px;height:1px;background:#c6c6c6;"></div>
<div style="left:213.5px;top:898.88px;width:1120px;height:1px;background:#dcdcdc;"></div>
<div class="t" style="top:881.88px;line-height:16px;font-size:12.6px;color:#505050;letter-spacing:-0.500px;left:192.49px;-webkit-text-stroke-width:0.1px;">33</div>
<div class="t" style="top:880.75px;line-height:16px;font-size:11.7px;color:#444;transform:scaleX(0.9231);font-style:italic;left:342.85px;">15.06</div>
<div class="t" style="top:880.75px;line-height:16px;font-size:11.7px;color:#444;transform:scaleX(0.9231);font-style:italic;left:523.87px;">3</div>
<div class="t" style="top:880.75px;line-height:16px;font-size:11.7px;color:#444;transform:scaleX(0.9035);left:537.25px;">Female</div>
<div class="t" style="top:880.75px;line-height:16px;font-size:11.7px;color:#444;transform:scaleX(0.9444);left:697.25px;">No</div>
<div class="t" style="top:880.75px;line-height:16px;font-size:11.7px;color:#444;transform:scaleX(0.8968);left:857.25px;">Sat</div>
<div class="t" style="top:880.75px;line-height:16px;font-size:11.7px;color:#444;transform:scaleX(0.9538);left:1017.25px;">Dinner</div>
<div class="t" style="top:880.75px;line-height:16px;font-size:11.7px;color:#444;transform:scaleX(0.9231);font-style:italic;left:1323.87px;">2</div>
<div style="left:184.25px;top:919.88px;width:29.25px;height:1px;background:#c6c6c6;"></div>
<div style="left:213.5px;top:919.88px;width:1120px;height:1px;background:#dcdcdc;"></div>
<div class="t" style="top:902.87px;line-height:16px;font-size:12.6px;color:#505050;letter-spacing:-0.500px;left:192.49px;-webkit-text-stroke-width:0.1px;">34</div>
<div class="t" style="top:901.75px;line-height:16px;font-size:11.7px;color:#444;transform:scaleX(0.9231);font-style:italic;left:342.85px;">20.69</div>
<div class="t" style="top:901.75px;line-height:16px;font-size:11.7px;color:#444;transform:scaleX(0.9231);font-style:italic;left:508.85px;">2.45</div>
<div class="t" style="top:901.75px;line-height:16px;font-size:11.7px;color:#444;transform:scaleX(0.9035);left:537.25px;">Female</div>
<div class="t" style="top:901.75px;line-height:16px;font-size:11.7px;color:#444;transform:scaleX(0.9444);left:697.25px;">No</div>
<div class="t" style="top:901.75px;line-height:16px;font-size:11.7px;color:#444;transform:scaleX(0.8968);left:857.25px;">Sat</div>
<div class="t" style="top:901.75px;line-height:16px;font-size:11.7px;color:#444;transform:scaleX(0.9538);left:1017.25px;">Dinner</div>
<div class="t" style="top:901.75px;line-height:16px;font-size:11.7px;color:#444;transform:scaleX(0.9231);font-style:italic;left:1323.87px;">4</div>
<div style="left:184.25px;top:940.88px;width:29.25px;height:1px;background:#c6c6c6;"></div>
<div style="left:213.5px;top:940.88px;width:1120px;height:1px;background:#dcdcdc;"></div>
<div class="t" style="top:923.88px;line-height:16px;font-size:12.6px;color:#505050;letter-spacing:-0.500px;left:192.49px;-webkit-text-stroke-width:0.1px;">35</div>
<div class="t" style="top:922.75px;line-height:16px;font-size:11.7px;color:#444;transform:scaleX(0.9231);font-style:italic;left:342.85px;">17.78</div>
<div class="t" style="top:922.75px;line-height:16px;font-size:11.7px;color:#444;transform:scaleX(0.9231);font-style:italic;left:508.85px;">3.27</div>
<div class="t" style="top:922.75px;line-height:16px;font-size:11.7px;color:#444;transform:scaleX(0.9760);left:537.25px;">Male</div>
<div class="t" style="top:922.75px;line-height:16px;font-size:11.7px;color:#444;transform:scaleX(0.9444);left:697.25px;">No</div>
<div class="t" style="top:922.75px;line-height:16px;font-size:11.7px;color:#444;transform:scaleX(0.8968);left:857.25px;">Sat</div>
<div class="t" style="top:922.75px;line-height:16px;font-size:11.7px;color:#444;transform:scaleX(0.9538);left:1017.25px;">Dinner</div>
<div class="t" style="top:922.75px;line-height:16px;font-size:11.7px;color:#444;transform:scaleX(0.9231);font-style:italic;left:1323.87px;">2</div>
<div style="left:184.25px;top:961.88px;width:29.25px;height:1px;background:#c6c6c6;"></div>
<div style="left:213.5px;top:961.88px;width:1120px;height:1px;background:#dcdcdc;"></div>
<div class="t" style="top:944.88px;line-height:16px;font-size:12.6px;color:#505050;letter-spacing:-0.500px;left:192.49px;-webkit-text-stroke-width:0.1px;">36</div>
<div class="t" style="top:943.75px;line-height:16px;font-size:11.7px;color:#444;transform:scaleX(0.9231);font-style:italic;left:342.85px;">24.06</div>
<div class="t" style="top:943.75px;line-height:16px;font-size:11.7px;color:#444;transform:scaleX(0.9231);font-style:italic;left:514.86px;">3.6</div>
<div class="t" style="top:943.75px;line-height:16px;font-size:11.7px;color:#444;transform:scaleX(0.9760);left:537.25px;">Male</div>
<div class="t" style="top:943.75px;line-height:16px;font-size:11.7px;color:#444;transform:scaleX(0.9444);left:697.25px;">No</div>
<div class="t" style="top:943.75px;line-height:16px;font-size:11.7px;color:#444;transform:scaleX(0.8968);left:857.25px;">Sat</div>
<div class="t" style="top:943.75px;line-height:16px;font-size:11.7px;color:#444;transform:scaleX(0.9538);left:1017.25px;">Dinner</div>
<div class="t" style="top:943.75px;line-height:16px;font-size:11.7px;color:#444;transform:scaleX(0.9231);font-style:italic;left:1323.87px;">3</div>
<div style="left:184.25px;top:982.88px;width:29.25px;height:1px;background:#c6c6c6;"></div>
<div style="left:213.5px;top:982.88px;width:1120px;height:1px;background:#dcdcdc;"></div>
<div class="t" style="top:965.88px;line-height:16px;font-size:12.6px;color:#505050;letter-spacing:-0.500px;left:192.49px;-webkit-text-stroke-width:0.1px;">37</div>
<div class="t" style="top:964.75px;line-height:16px;font-size:11.7px;color:#444;transform:scaleX(0.9231);font-style:italic;left:342.85px;">16.31</div>
<div class="t" style="top:964.75px;line-height:16px;font-size:11.7px;color:#444;transform:scaleX(0.9231);font-style:italic;left:523.87px;">2</div>
<div class="t" style="top:964.75px;line-height:16px;font-size:11.7px;color:#444;transform:scaleX(0.9760);left:537.25px;">Male</div>
<div class="t" style="top:964.75px;line-height:16px;font-size:11.7px;color:#444;transform:scaleX(0.9444);left:697.25px;">No</div>
<div class="t" style="top:964.75px;line-height:16px;font-size:11.7px;color:#444;transform:scaleX(0.8968);left:857.25px;">Sat</div>
<div class="t" style="top:964.75px;line-height:16px;font-size:11.7px;color:#444;transform:scaleX(0.9538);left:1017.25px;">Dinner</div>
<div class="t" style="top:964.75px;line-height:16px;font-size:11.7px;color:#444;transform:scaleX(0.9231);font-style:italic;left:1323.87px;">3</div>
<div style="left:184.25px;top:1003.88px;width:29.25px;height:1px;background:#c6c6c6;"></div>
<div style="left:213.5px;top:1003.88px;width:1120px;height:1px;background:#dcdcdc;"></div>
<div class="t" style="top:986.88px;line-height:16px;font-size:12.6px;color:#505050;letter-spacing:-0.500px;left:192.49px;-webkit-text-stroke-width:0.1px;">38</div>
<div class="t" style="top:985.75px;line-height:16px;font-size:11.7px;color:#444;transform:scaleX(0.9231);font-style:italic;left:342.85px;">16.93</div>
<div class="t" style="top:985.75px;line-height:16px;font-size:11.7px;color:#444;transform:scaleX(0.9231);font-style:italic;left:508.85px;">3.07</div>
<div class="t" style="top:985.75px;line-height:16px;font-size:11.7px;color:#444;transform:scaleX(0.9035);left:537.25px;">Female</div>
<div class="t" style="top:985.75px;line-height:16px;font-size:11.7px;color:#444;transform:scaleX(0.9444);left:697.25px;">No</div>
<div class="t" style="top:985.75px;line-height:16px;font-size:11.7px;color:#444;transform:scaleX(0.8968);left:857.25px;">Sat</div>
<div class="t" style="top:985.75px;line-height:16px;font-size:11.7px;color:#444;transform:scaleX(0.9538);left:1017.25px;">Dinner</div>
<div class="t" style="top:985.75px;line-height:16px;font-size:11.7px;color:#444;transform:scaleX(0.9231);font-style:italic;left:1323.87px;">3</div>
<div style="left:184.25px;top:1024.88px;width:29.25px;height:1px;background:#c6c6c6;"></div>
<div style="left:213.5px;top:1024.88px;width:1120px;height:1px;background:#dcdcdc;"></div>
<div class="t" style="top:1007.87px;line-height:16px;font-size:12.6px;color:#505050;letter-spacing:-0.500px;left:192.49px;-webkit-text-stroke-width:0.1px;">39</div>
<div class="t" style="top:1006.75px;line-height:16px;font-size:11.7px;color:#444;transform:scaleX(0.9231);font-style:italic;left:342.85px;">18.69</div>
<div class="t" style="top:1006.75px;line-height:16px;font-size:11.7px;color:#444;transform:scaleX(0.9231);font-style:italic;left:508.85px;">2.31</div>
<div class="t" style="top:1006.75px;line-height:16px;font-size:11.7px;color:#444;transform:scaleX(0.9760);left:537.25px;">Male</div>
<div class="t" style="top:1006.75px;line-height:16px;font-size:11.7px;color:#444;transform:scaleX(0.9444);left:697.25px;">No</div>
<div class="t" style="top:1006.75px;line-height:16px;font-size:11.7px;color:#444;transform:scaleX(0.8968);left:857.25px;">Sat</div>
<div class="t" style="top:1006.75px;line-height:16px;font-size:11.7px;color:#444;transform:scaleX(0.9538);left:1017.25px;">Dinner</div>
<div class="t" style="top:1006.75px;line-height:16px;font-size:11.7px;color:#444;transform:scaleX(0.9231);font-style:italic;left:1323.87px;">3</div>
<div style="left:184.25px;top:1045.88px;width:29.25px;height:1px;background:#c6c6c6;"></div>
<div style="left:213.5px;top:1045.88px;width:1120px;height:1px;background:#dcdcdc;"></div>
<div class="t" style="top:1028.88px;line-height:16px;font-size:12.6px;color:#505050;letter-spacing:-0.500px;left:192.49px;-webkit-text-stroke-width:0.1px;">40</div>
<div class="t" style="top:1027.75px;line-height:16px;font-size:11.7px;color:#444;transform:scaleX(0.9231);font-style:italic;left:342.85px;">31.27</div>
<div class="t" style="top:1027.75px;line-height:16px;font-size:11.7px;color:#444;transform:scaleX(0.9231);font-style:italic;left:523.87px;">5</div>
<div class="t" style="top:1027.75px;line-height:16px;font-size:11.7px;color:#444;transform:scaleX(0.9760);left:537.25px;">Male</div>
<div class="t" style="top:1027.75px;line-height:16px;font-size:11.7px;color:#444;transform:scaleX(0.9444);left:697.25px;">No</div>
<div class="t" style="top:1027.75px;line-height:16px;font-size:11.7px;color:#444;transform:scaleX(0.8968);left:857.25px;">Sat</div>
<div class="t" style="top:1027.75px;line-height:16px;font-size:11.7px;color:#444;transform:scaleX(0.9538);left:1017.25px;">Dinner</div>
<div class="t" style="top:1027.75px;line-height:16px;font-size:11.7px;color:#444;transform:scaleX(0.9231);font-style:italic;left:1323.87px;">3</div>
<div style="left:184.25px;top:1066.88px;width:29.25px;height:1px;background:#c6c6c6;"></div>
<div style="left:213.5px;top:1066.88px;width:1120px;height:1px;background:#dcdcdc;"></div>
<div class="t" style="top:1049.88px;line-height:16px;font-size:12.6px;color:#505050;letter-spacing:-0.500px;left:192.49px;-webkit-text-stroke-width:0.1px;">41</div>
<div class="t" style="top:1048.75px;line-height:16px;font-size:11.7px;color:#444;transform:scaleX(0.9231);font-style:italic;left:342.85px;">16.04</div>
<div class="t" style="top:1048.75px;line-height:16px;font-size:11.7px;color:#444;transform:scaleX(0.9231);font-style:italic;left:508.85px;">2.24</div>
<div class="t" style="top:1048.75px;line-height:16px;font-size:11.7px;color:#444;transform:scaleX(0.9760);left:537.25px;">Male</div>
<div class="t" style="top:1048.75px;line-height:16px;font-size:11.7px;color:#444;transform:scaleX(0.9444);left:697.25px;">No</div>
<div class="t" style="top:1048.75px;line-height:16px;font-size:11.7px;color:#444;transform:scaleX(0.8968);left:857.25px;">Sat</div>
<div class="t" style="top:1048.75px;line-height:16px;font-size:11.7px;color:#444;transform:scaleX(0.9538);left:1017.25px;">Dinner</div>
<div class="t" style="top:1048.75px;line-height:16px;font-size:11.7px;color:#444;transform:scaleX(0.9231);font-style:italic;left:1323.87px;">3</div>
<div class="t" style="top:184.06px;line-height:16px;font-size:14.5px;color:#565656;transform:scaleX(0.7938);left:215.25px;-webkit-text-stroke-width:0.4px;">1.2</div>
<div class="t" style="top:183.75px;line-height:16px;font-size:11.7px;color:#444;transform:scaleX(0.9303);font-weight:700;left:238px;-webkit-text-stroke-width:0.1px;">total_bill</div>
<div style="left:355.12px;top:184.38px;width:15.5px;height:15.25px;background:#fff;border:1px solid #b4b4b4;box-sizing:border-box;"></div>
<svg style="left:359.5px;top:190px" width="6.75" height="3.5" viewBox="0 0 10 6"><path d="M0 0H10L5 6Z" fill="#555"/></svg>
<div class="t" style="top:184.06px;line-height:16px;font-size:14.5px;color:#565656;transform:scaleX(0.7938);left:375.25px;-webkit-text-stroke-width:0.4px;">1.2</div>
<div class="t" style="top:183.75px;line-height:16px;font-size:11.7px;color:#444;transform:scaleX(0.9620);font-weight:700;left:398px;-webkit-text-stroke-width:0.1px;">tip</div>
<div style="left:515.12px;top:184.38px;width:15.5px;height:15.25px;background:#fff;border:1px solid #b4b4b4;box-sizing:border-box;"></div>
<svg style="left:519.5px;top:190px" width="6.75" height="3.5" viewBox="0 0 10 6"><path d="M0 0H10L5 6Z" fill="#555"/></svg>
<div class="t" style="top:184.88px;line-height:16px;font-size:11.4px;color:#5a5a5a;transform:scaleX(0.9042);left:536.25px;-webkit-text-stroke-width:0.25px;">A</div>
<div class="t" style="top:180.12px;line-height:16px;font-size:10.6px;color:#5a5a5a;transform:scaleX(0.8663);left:542.38px;-webkit-text-stroke-width:0.25px;">B</div>
<div class="t" style="top:188.00px;line-height:16px;font-size:10.6px;color:#5a5a5a;transform:scaleX(0.8818);left:545.88px;-webkit-text-stroke-width:0.25px;">C</div>
<div class="t" style="top:183.75px;line-height:16px;font-size:11.7px;color:#444;transform:scaleX(0.8452);font-weight:700;left:558px;-webkit-text-stroke-width:0.1px;">sex</div>
<div style="left:675.12px;top:184.38px;width:15.5px;height:15.25px;background:#fff;border:1px solid #b4b4b4;box-sizing:border-box;"></div>
<svg style="left:679.5px;top:190px" width="6.75" height="3.5" viewBox="0 0 10 6"><path d="M0 0H10L5 6Z" fill="#555"/></svg>
<div class="t" style="top:184.88px;line-height:16px;font-size:11.4px;color:#5a5a5a;transform:scaleX(0.9042);left:696.25px;-webkit-text-stroke-width:0.25px;">A</div>
<div class="t" style="top:180.12px;line-height:16px;font-size:10.6px;color:#5a5a5a;transform:scaleX(0.8663);left:702.38px;-webkit-text-stroke-width:0.25px;">B</div>
<div class="t" style="top:188.00px;line-height:16px;font-size:10.6px;color:#5a5a5a;transform:scaleX(0.8818);left:705.88px;-webkit-text-stroke-width:0.25px;">C</div>
<div class="t" style="top:183.75px;line-height:16px;font-size:11.7px;color:#444;transform:scaleX(0.8889);font-weight:700;left:718px;-webkit-text-stroke-width:0.1px;">smoker</div>
<div style="left:835.12px;top:184.38px;width:15.5px;height:15.25px;background:#fff;border:1px solid #b4b4b4;box-sizing:border-box;"></div>
<svg style="left:839.5px;top:190px" width="6.75" height="3.5" viewBox="0 0 10 6"><path d="M0 0H10L5 6Z" fill="#555"/></svg>
<div class="t" style="top:184.88px;line-height:16px;font-size:11.4px;color:#5a5a5a;transform:scaleX(0.9042);left:856.25px;-webkit-text-stroke-width:0.25px;">A</div>
<div class="t" style="top:180.12px;line-height:16px;font-size:10.6px;color:#5a5a5a;transform:scaleX(0.8663);left:862.38px;-webkit-text-stroke-width:0.25px;">B</div>
<div class="t" style="top:188.00px;line-height:16px;font-size:10.6px;color:#5a5a5a;transform:scaleX(0.8818);left:865.88px;-webkit-text-stroke-width:0.25px;">C</div>
<div class="t" style="top:183.75px;line-height:16px;font-size:11.7px;color:#444;transform:scaleX(0.9052);font-weight:700;left:878px;-webkit-text-stroke-width:0.1px;">day</div>
<div style="left:995.12px;top:184.38px;width:15.5px;height:15.25px;background:#fff;border:1px solid #b4b4b4;box-sizing:border-box;"></div>
<svg style="left:999.5px;top:190px" width="6.75" height="3.5" viewBox="0 0 10 6"><path d="M0 0H10L5 6Z" fill="#555"/></svg>
<div class="t" style="top:184.88px;line-height:16px;font-size:11.4px;color:#5a5a5a;transform:scaleX(0.9042);left:1016.25px;-webkit-text-stroke-width:0.25px;">A</div>
<div class="t" style="top:180.12px;line-height:16px;font-size:10.6px;color:#5a5a5a;transform:scaleX(0.8663);left:1022.38px;-webkit-text-stroke-width:0.25px;">B</div>
<div class="t" style="top:188.00px;line-height:16px;font-size:10.6px;color:#5a5a5a;transform:scaleX(0.8818);left:1025.88px;-webkit-text-stroke-width:0.25px;">C</div>
<div class="t" style="top:183.75px;line-height:16px;font-size:11.7px;color:#444;transform:scaleX(0.9457);font-weight:700;left:1038px;-webkit-text-stroke-width:0.1px;">time</div>
<div style="left:1155.12px;top:184.38px;width:15.5px;height:15.25px;background:#fff;border:1px solid #b4b4b4;box-sizing:border-box;"></div>
<svg style="left:1159.5px;top:190px" width="6.75" height="3.5" viewBox="0 0 10 6"><path d="M0 0H10L5 6Z" fill="#555"/></svg>
<div class="t" style="top:185.38px;line-height:16px;font-size:11px;color:#5a5a5a;font-weight:700;left:1175px;-webkit-text-stroke-width:0;">1</div>
<div class="t" style="top:181.12px;line-height:16px;font-size:11px;color:#5a5a5a;font-weight:700;left:1180.88px;-webkit-text-stroke-width:0;">2</div>
<div class="t" style="top:187.75px;line-height:16px;font-size:11px;color:#5a5a5a;font-weight:700;left:1185.88px;-webkit-text-stroke-width:0;">3</div>
<div class="t" style="top:183.75px;line-height:16px;font-size:11.7px;color:#444;transform:scaleX(0.8252);font-weight:700;left:1198px;-webkit-text-stroke-width:0.1px;">size</div>
<div style="left:1315.12px;top:184.38px;width:15.5px;height:15.25px;background:#fff;border:1px solid #b4b4b4;box-sizing:border-box;"></div>
<svg style="left:1319.5px;top:190px" width="6.75" height="3.5" viewBox="0 0 10 6"><path d="M0 0H10L5 6Z" fill="#555"/></svg>
<svg style="left:190.12px;top:186.12px;" width="12.75" height="12" viewBox="0 0 10.2 9.6"><rect x=".5" y=".5" width="9.2" height="8.6" fill="#fff" stroke="#7a7a7a" stroke-width="1"/><rect x="0" y="0" width="10.2" height="2.2" fill="#3b78c3"/><path d="M0 4.6h10.2M0 6.9h10.2M3.4 2.2v7.4M6.8 2.2v7.4" stroke="#9a9a9a" stroke-width=".7" fill="none"/></svg>
<svg style="left:204.88px;top:193.75px" width="4.25" height="2.5" viewBox="0 0 10 6"><path d="M0 0H10L5 6Z" fill="#555"/></svg>
<div style="left:1633.25px;top:207px;width:16.5px;height:850.5px;background:#f0f0f0;"></div>
<div style="left:1634px;top:241.5px;width:15px;height:632.75px;background:#cdcdcd;"></div>
<svg style="left:1635.75px;top:223.75px;" width="11.75" height="8" viewBox="0 0 9.4 6.4"><path d="M.9 5.6L4.7 1.4l3.8 4.2" fill="none" stroke="#505050" stroke-width="1.7"/></svg>
<svg style="left:1635.75px;top:1031.25px;" width="11.75" height="8" viewBox="0 0 9.4 6.4"><path d="M.9 .8L4.7 5l3.8-4.2" fill="none" stroke="#505050" stroke-width="1.7"/></svg>
<div class="t" style="top:160.62px;line-height:16px;font-size:18.8px;color:#57956f;transform:scaleX(0.9851);left:1669px;line-height:30px;margin-top:-7px;-webkit-text-stroke-width:0;">Query Settings</div>
<svg style="left:1882.25px;top:163.75px;" width="11.25" height="10.5" viewBox="0 0 9 8.4"><path d="M.5 .5l8 7.4M8.5 .5l-8 7.4" fill="none" stroke="#5e5e5e" stroke-width="1.15"/></svg>
<svg style="left:1665.25px;top:203.25px;" width="6" height="6" viewBox="0 0 4.8 4.8"><path d="M4.8 0V4.8H0Z" fill="#444"/></svg>
<div class="t" style="top:197.50px;line-height:16px;font-size:11.7px;color:#2a7d56;transform:scaleX(0.9249);font-weight:700;left:1678.25px;-webkit-text-stroke-width:0.15px;">PROPERTIES</div>
<div class="t" style="top:218.88px;line-height:16px;font-size:11.7px;color:#444;left:1678.5px;">Name</div>
<div style="left:1677.88px;top:236.25px;width:218.12px;height:21.75px;background:#fff;border:1px solid #ababab;box-sizing:border-box;"></div>
<div class="t" style="top:239.75px;line-height:16px;font-size:11.7px;color:#444;transform:scaleX(0.8919);left:1684.25px;">Table1</div>
<div class="t" style="top:266.00px;line-height:16px;font-size:11.7px;color:#4572a6;transform:scaleX(1.0168);left:1678.25px;-webkit-text-stroke-width:0.15px;">All Properties</div>
<svg style="left:1665.25px;top:304.5px;" width="6" height="6" viewBox="0 0 4.8 4.8"><path d="M4.8 0V4.8H0Z" fill="#444"/></svg>
<div class="t" style="top:298.75px;line-height:16px;font-size:11.7px;color:#2a7d56;transform:scaleX(0.9315);font-weight:700;left:1678.25px;-webkit-text-stroke-width:0.15px;">APPLIED STEPS</div>
<div style="left:1677.88px;top:321.25px;width:218.12px;height:715.5px;background:#fff;border:1px solid #ababab;box-sizing:border-box;"></div>
<div class="t" style="top:324.38px;line-height:16px;font-size:11.7px;color:#444;transform:scaleX(0.9711);left:1699px;">Source</div>
<div style="left:1679px;top:342px;width:216px;height:19.88px;background:#d2eede;"></div>
<div class="t" style="top:344.25px;line-height:16px;font-size:11.7px;color:#444;transform:scaleX(1.0047);left:1699px;">Changed Type</div>
<svg style="left:1684px;top:347.12px;" width="10.75" height="9.5" viewBox="0 0 8.6 7.6"><path d="M.6 .6l7.4 6.4M8 .6L.6 7" fill="none" stroke="#444" stroke-width="1.1"/></svg>
<div style="left:0px;top:1056.75px;width:1920px;height:21px;background:#f3f2f1;"></div>
<div style="left:0px;top:1056.75px;width:1920px;height:1.75px;background:#d9d9d9;"></div>
<div class="t" style="top:1061.12px;line-height:16px;font-size:11.7px;color:#444;transform:scaleX(0.8792);left:5px;-webkit-text-stroke-width:0.18px;">7 COLUMNS, 244 ROWS</div>
<div class="t" style="top:1061.12px;line-height:16px;font-size:11.7px;color:#444;transform:scaleX(0.9498);left:138px;">Column profiling based on top 1000 rows</div>
<div class="t" style="top:1061.12px;line-height:16px;font-size:11.7px;color:#444;transform:scaleX(0.8789);left:1734px;-webkit-text-stroke-width:0.18px;">PREVIEW DOWNLOADED AT 4:11 PM</div>
<div style="left:0px;top:1077.62px;width:1920px;height:2.38px;background:#2d2d2d;"></div>
<div style="left:0px;top:1077.62px;width:47.88px;height:2.38px;background:#222;"></div>
<div style="left:47.88px;top:1077.62px;width:344.25px;height:2.38px;background:#e2e2e2;"></div>
<div style="left:540px;top:1077.62px;width:47.5px;height:2.38px;background:#b9763e;"></div>
<div style="left:587.5px;top:1077.62px;width:45px;height:2.38px;background:#363636;"></div>
</div></body></html>
